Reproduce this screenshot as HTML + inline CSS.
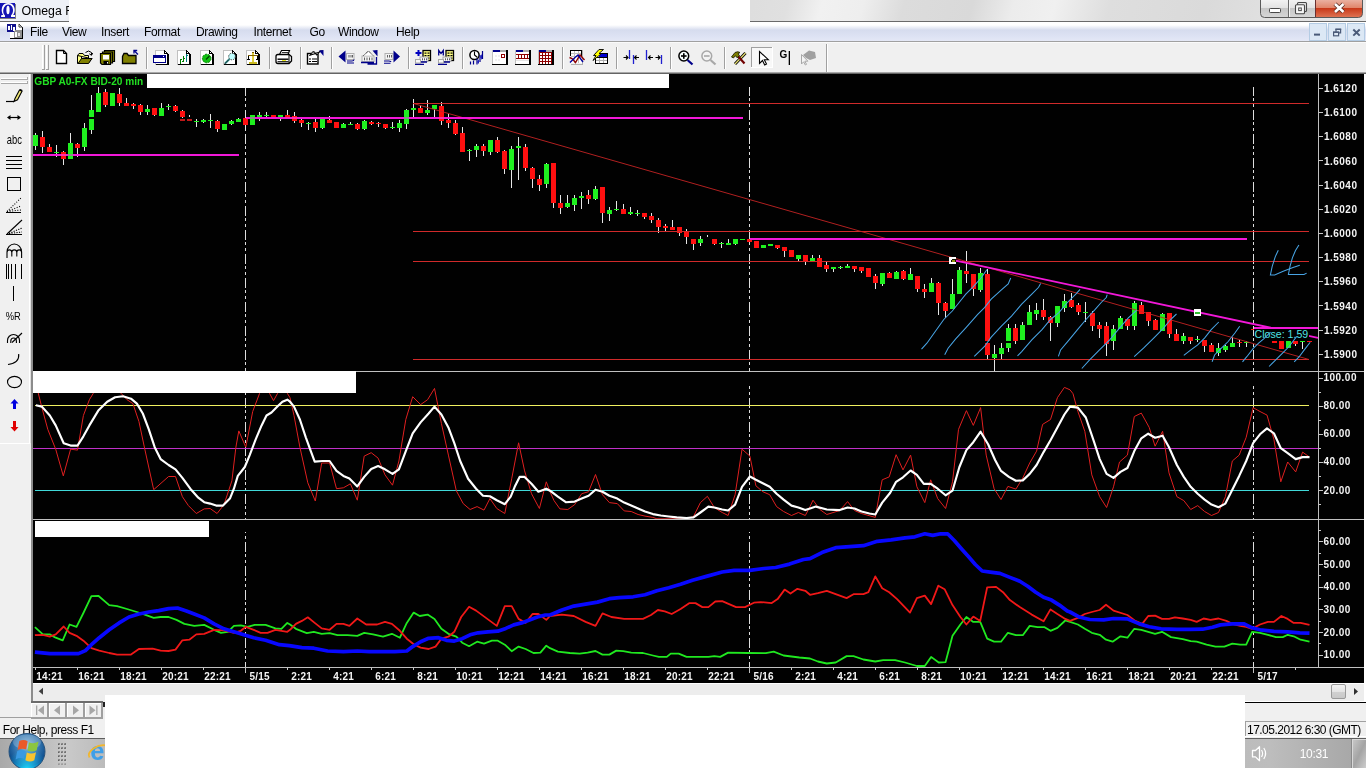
<!DOCTYPE html>
<html><head><meta charset="utf-8"><title>Omega</title>
<style>
*{box-sizing:border-box}
html,body{margin:0;padding:0}
body{width:1366px;height:768px;overflow:hidden;background:#f0f0f0;font-family:"Liberation Sans",sans-serif;font-size:12px;color:#000;position:relative}
.abs{position:absolute}
#title{left:0;top:0;width:1366px;height:21px;background:linear-gradient(105deg,#eef1f7 0%,#eef1f7 5%,#e6e6e6 6%,#dedede 55%,#e0e0e0 57.5%,#f1f1f1 60%,#eeeeee 63%,#dcdcdc 66%,#d9d9d9 71%,#ececec 74%,#f0f0f0 77%,#dedede 81%,#dadada 88%,#e2e2e2 94%,#e8e8e8 100%)}
#titleline{left:0;top:21px;width:1366px;height:1px;background:#6a6a6a}
#titlewhite{left:69px;top:0;width:681px;height:22px;background:#fff}
#menu{left:0;top:22px;width:1366px;height:19px;background:linear-gradient(180deg,#fff 0,#fff 3px,#d6dcee 8px,#dde2f3 14px,#e4e8f6 19px)}
#menuline{left:0;top:41px;width:1366px;height:2px;background:linear-gradient(180deg,#a0a0a0 0,#a0a0a0 1px,#fafafa 1px)}
.mi{position:absolute;opacity:0.999;top:25px;font-size:12px;letter-spacing:-0.35px;line-height:15px;white-space:nowrap}
#toolbar{left:0;top:43px;width:1366px;height:29px;background:#f0f0f0}
#tbline{left:0;top:72px;width:1366px;height:2px;background:linear-gradient(180deg,#a8a8a8 0,#a8a8a8 1px,#646464 1px)}
#leftp{left:0;top:74px;width:33px;height:694px;background:#f0f0f0}
#scroll{left:33px;top:683px;width:1331px;height:19px;background:linear-gradient(180deg,#fff 0,#fff 1px,#ededed 1px)}
#status{left:0;top:702px;width:1366px;height:36px;background:#f0f0f0}
#task{left:0;top:738px;width:1366px;height:30px;background:linear-gradient(90deg,#a9a9a9 0,#c9c9c9 5%,#b4b4b4 9%,#a8a8a8 50%,#bdbdbd 93%,#b2b2b2 96%,#a4a4a4 100%);border-top:1px solid #5e5e5e}
#bigwhite{left:105px;top:695px;width:1140px;height:73px;background:#fff}
</style></head>
<body>
<div id="title" class="abs"></div>
<div id="titleline" class="abs"></div>
<div id="menu" class="abs"></div>
<div id="menuline" class="abs"></div>

<div id="toolbar" class="abs"></div>
<div id="tbline" class="abs"></div>
<div id="leftp" class="abs"></div>
<div id="scroll" class="abs"></div>
<div id="status" class="abs"></div>
<div id="task" class="abs"></div>
<svg class="abs" style="left:0;top:0;opacity:0.999" width="1366" height="768" viewBox="0 0 1366 768">
<rect x="33" y="74" width="1331" height="609" fill="#000"/>
<g shape-rendering="crispEdges">
<rect x="33" y="371" width="1331" height="1" fill="#c0c0c0"/>
<rect x="33" y="519" width="1331" height="1" fill="#c0c0c0"/>
<rect x="33" y="667" width="1331" height="1" fill="#c0c0c0"/>
<rect x="1318" y="74" width="1" height="594" fill="#c0c0c0"/>
</g>
<line x1="245.5" y1="87" x2="245.5" y2="371" stroke="#dedede" stroke-width="1" stroke-dasharray="10 2 3 3 3 3" stroke-dashoffset="1" shape-rendering="crispEdges"/>
<line x1="245.5" y1="386" x2="245.5" y2="519" stroke="#dedede" stroke-width="1" stroke-dasharray="10 2 3 3 3 3" stroke-dashoffset="12" shape-rendering="crispEdges"/>
<line x1="245.5" y1="532" x2="245.5" y2="667" stroke="#dedede" stroke-width="1" stroke-dasharray="10 2 3 3 3 3" stroke-dashoffset="14" shape-rendering="crispEdges"/>
<rect x="245" y="667" width="1" height="6" fill="#c0c0c0" shape-rendering="crispEdges"/>
<line x1="749.5" y1="87" x2="749.5" y2="371" stroke="#dedede" stroke-width="1" stroke-dasharray="10 2 3 3 3 3" stroke-dashoffset="1" shape-rendering="crispEdges"/>
<line x1="749.5" y1="386" x2="749.5" y2="519" stroke="#dedede" stroke-width="1" stroke-dasharray="10 2 3 3 3 3" stroke-dashoffset="12" shape-rendering="crispEdges"/>
<line x1="749.5" y1="532" x2="749.5" y2="667" stroke="#dedede" stroke-width="1" stroke-dasharray="10 2 3 3 3 3" stroke-dashoffset="14" shape-rendering="crispEdges"/>
<rect x="749" y="667" width="1" height="6" fill="#c0c0c0" shape-rendering="crispEdges"/>
<line x1="1253.5" y1="87" x2="1253.5" y2="371" stroke="#dedede" stroke-width="1" stroke-dasharray="10 2 3 3 3 3" stroke-dashoffset="1" shape-rendering="crispEdges"/>
<line x1="1253.5" y1="386" x2="1253.5" y2="519" stroke="#dedede" stroke-width="1" stroke-dasharray="10 2 3 3 3 3" stroke-dashoffset="12" shape-rendering="crispEdges"/>
<line x1="1253.5" y1="532" x2="1253.5" y2="667" stroke="#dedede" stroke-width="1" stroke-dasharray="10 2 3 3 3 3" stroke-dashoffset="14" shape-rendering="crispEdges"/>
<rect x="1253" y="667" width="1" height="6" fill="#c0c0c0" shape-rendering="crispEdges"/>
<g shape-rendering="crispEdges">
<rect x="35" y="133" width="1" height="17" fill="#e6e6e6"/>
<rect x="33" y="135" width="5" height="11" fill="#1ff01f"/>
<rect x="42" y="131" width="1" height="22" fill="#e6e6e6"/>
<rect x="40" y="137" width="5" height="10" fill="#ff1010"/>
<rect x="49" y="144" width="1" height="8" fill="#e6e6e6"/>
<rect x="47" y="147" width="5" height="5" fill="#ff1010"/>
<rect x="56" y="145" width="1" height="12" fill="#e6e6e6"/>
<rect x="54" y="152" width="5" height="1" fill="#1ff01f"/>
<rect x="63" y="151" width="1" height="14" fill="#e6e6e6"/>
<rect x="61" y="152" width="5" height="7" fill="#ff1010"/>
<rect x="70" y="133" width="1" height="26" fill="#e6e6e6"/>
<rect x="68" y="143" width="5" height="16" fill="#1ff01f"/>
<rect x="77" y="143" width="1" height="14" fill="#e6e6e6"/>
<rect x="75" y="144" width="5" height="4" fill="#ff1010"/>
<rect x="84" y="123" width="1" height="28" fill="#e6e6e6"/>
<rect x="82" y="128" width="5" height="19" fill="#1ff01f"/>
<rect x="91" y="95" width="1" height="39" fill="#e6e6e6"/>
<rect x="89" y="110" width="5" height="20" fill="#1ff01f"/>
<rect x="98" y="87" width="1" height="25" fill="#e6e6e6"/>
<rect x="96" y="93" width="5" height="19" fill="#1ff01f"/>
<rect x="105" y="89" width="1" height="18" fill="#e6e6e6"/>
<rect x="103" y="92" width="5" height="13" fill="#ff1010"/>
<rect x="112" y="93" width="1" height="13" fill="#e6e6e6"/>
<rect x="110" y="93" width="5" height="13" fill="#1ff01f"/>
<rect x="119" y="88" width="1" height="18" fill="#e6e6e6"/>
<rect x="117" y="94" width="5" height="9" fill="#ff1010"/>
<rect x="126" y="98" width="1" height="8" fill="#e6e6e6"/>
<rect x="124" y="103" width="5" height="3" fill="#ff1010"/>
<rect x="133" y="103" width="1" height="6" fill="#e6e6e6"/>
<rect x="131" y="104" width="5" height="2" fill="#ff1010"/>
<rect x="140" y="104" width="1" height="11" fill="#e6e6e6"/>
<rect x="138" y="105" width="5" height="7" fill="#ff1010"/>
<rect x="147" y="105" width="1" height="10" fill="#e6e6e6"/>
<rect x="145" y="109" width="5" height="3" fill="#1ff01f"/>
<rect x="154" y="108" width="1" height="8" fill="#e6e6e6"/>
<rect x="152" y="108" width="5" height="7" fill="#ff1010"/>
<rect x="161" y="103" width="1" height="13" fill="#e6e6e6"/>
<rect x="159" y="108" width="5" height="8" fill="#1ff01f"/>
<rect x="168" y="104" width="1" height="6" fill="#e6e6e6"/>
<rect x="166" y="106" width="5" height="1" fill="#1ff01f"/>
<rect x="175" y="105" width="1" height="7" fill="#e6e6e6"/>
<rect x="173" y="106" width="5" height="5" fill="#ff1010"/>
<rect x="182" y="110" width="1" height="8" fill="#e6e6e6"/>
<rect x="180" y="111" width="5" height="6" fill="#ff1010"/>
<rect x="189" y="115" width="1" height="2" fill="#e6e6e6"/>
<rect x="187" y="119" width="5" height="2" fill="#ff1010"/>
<rect x="196" y="119" width="1" height="8" fill="#e6e6e6"/>
<rect x="194" y="121" width="5" height="1" fill="#1ff01f"/>
<rect x="203" y="119" width="1" height="4" fill="#e6e6e6"/>
<rect x="201" y="120" width="5" height="2" fill="#1ff01f"/>
<rect x="210" y="114" width="1" height="14" fill="#e6e6e6"/>
<rect x="208" y="120" width="5" height="1" fill="#1ff01f"/>
<rect x="217" y="120" width="1" height="12" fill="#e6e6e6"/>
<rect x="215" y="121" width="5" height="8" fill="#ff1010"/>
<rect x="224" y="124" width="1" height="6" fill="#e6e6e6"/>
<rect x="222" y="124" width="5" height="6" fill="#1ff01f"/>
<rect x="231" y="120" width="1" height="5" fill="#e6e6e6"/>
<rect x="229" y="121" width="5" height="3" fill="#1ff01f"/>
<rect x="238" y="118" width="1" height="4" fill="#e6e6e6"/>
<rect x="236" y="119" width="5" height="3" fill="#1ff01f"/>
<rect x="245" y="117" width="1" height="14" fill="#e6e6e6"/>
<rect x="243" y="118" width="5" height="7" fill="#ff1010"/>
<rect x="252" y="115" width="1" height="10" fill="#e6e6e6"/>
<rect x="250" y="115" width="5" height="10" fill="#1ff01f"/>
<rect x="259" y="112" width="1" height="9" fill="#e6e6e6"/>
<rect x="257" y="115" width="5" height="2" fill="#1ff01f"/>
<rect x="266" y="112" width="1" height="5" fill="#e6e6e6"/>
<rect x="264" y="115" width="5" height="1" fill="#1ff01f"/>
<rect x="273" y="115" width="1" height="3" fill="#e6e6e6"/>
<rect x="271" y="115" width="5" height="2" fill="#ff1010"/>
<rect x="280" y="115" width="1" height="6" fill="#e6e6e6"/>
<rect x="278" y="115" width="5" height="2" fill="#1ff01f"/>
<rect x="287" y="110" width="1" height="8" fill="#e6e6e6"/>
<rect x="285" y="115" width="5" height="3" fill="#ff1010"/>
<rect x="294" y="112" width="1" height="11" fill="#e6e6e6"/>
<rect x="292" y="116" width="5" height="5" fill="#ff1010"/>
<rect x="301" y="119" width="1" height="8" fill="#e6e6e6"/>
<rect x="299" y="120" width="5" height="3" fill="#ff1010"/>
<rect x="308" y="122" width="1" height="8" fill="#e6e6e6"/>
<rect x="306" y="123" width="5" height="1" fill="#1ff01f"/>
<rect x="315" y="119" width="1" height="13" fill="#e6e6e6"/>
<rect x="313" y="122" width="5" height="6" fill="#ff1010"/>
<rect x="322" y="118" width="1" height="11" fill="#e6e6e6"/>
<rect x="320" y="119" width="5" height="9" fill="#1ff01f"/>
<rect x="329" y="116" width="1" height="7" fill="#e6e6e6"/>
<rect x="327" y="120" width="5" height="3" fill="#ff1010"/>
<rect x="336" y="122" width="1" height="6" fill="#e6e6e6"/>
<rect x="334" y="122" width="5" height="6" fill="#ff1010"/>
<rect x="343" y="123" width="1" height="5" fill="#e6e6e6"/>
<rect x="341" y="124" width="5" height="4" fill="#1ff01f"/>
<rect x="350" y="122" width="1" height="3" fill="#e6e6e6"/>
<rect x="348" y="124" width="5" height="1" fill="#1ff01f"/>
<rect x="357" y="123" width="1" height="7" fill="#e6e6e6"/>
<rect x="355" y="124" width="5" height="5" fill="#ff1010"/>
<rect x="364" y="120" width="1" height="10" fill="#e6e6e6"/>
<rect x="362" y="121" width="5" height="8" fill="#1ff01f"/>
<rect x="371" y="121" width="1" height="4" fill="#e6e6e6"/>
<rect x="369" y="122" width="5" height="2" fill="#ff1010"/>
<rect x="378" y="122" width="1" height="5" fill="#e6e6e6"/>
<rect x="376" y="123" width="5" height="1" fill="#ff1010"/>
<rect x="385" y="124" width="1" height="5" fill="#e6e6e6"/>
<rect x="383" y="124" width="5" height="4" fill="#ff1010"/>
<rect x="392" y="122" width="1" height="7" fill="#e6e6e6"/>
<rect x="390" y="127" width="5" height="1" fill="#1ff01f"/>
<rect x="399" y="120" width="1" height="12" fill="#e6e6e6"/>
<rect x="397" y="123" width="5" height="5" fill="#1ff01f"/>
<rect x="406" y="109" width="1" height="20" fill="#e6e6e6"/>
<rect x="404" y="110" width="5" height="14" fill="#1ff01f"/>
<rect x="413" y="99" width="1" height="18" fill="#e6e6e6"/>
<rect x="411" y="108" width="5" height="2" fill="#1ff01f"/>
<rect x="420" y="105" width="1" height="8" fill="#e6e6e6"/>
<rect x="418" y="108" width="5" height="5" fill="#ff1010"/>
<rect x="427" y="100" width="1" height="15" fill="#e6e6e6"/>
<rect x="425" y="110" width="5" height="3" fill="#1ff01f"/>
<rect x="434" y="105" width="1" height="12" fill="#e6e6e6"/>
<rect x="432" y="105" width="5" height="4" fill="#1ff01f"/>
<rect x="441" y="102" width="1" height="23" fill="#e6e6e6"/>
<rect x="439" y="106" width="5" height="15" fill="#ff1010"/>
<rect x="448" y="114" width="1" height="14" fill="#e6e6e6"/>
<rect x="446" y="120" width="5" height="3" fill="#ff1010"/>
<rect x="455" y="120" width="1" height="15" fill="#e6e6e6"/>
<rect x="453" y="123" width="5" height="11" fill="#ff1010"/>
<rect x="462" y="127" width="1" height="25" fill="#e6e6e6"/>
<rect x="460" y="133" width="5" height="19" fill="#ff1010"/>
<rect x="469" y="149" width="1" height="12" fill="#e6e6e6"/>
<rect x="467" y="150" width="5" height="1" fill="#1ff01f"/>
<rect x="476" y="144" width="1" height="13" fill="#e6e6e6"/>
<rect x="474" y="146" width="5" height="4" fill="#1ff01f"/>
<rect x="483" y="144" width="1" height="12" fill="#e6e6e6"/>
<rect x="481" y="146" width="5" height="5" fill="#ff1010"/>
<rect x="490" y="140" width="1" height="15" fill="#e6e6e6"/>
<rect x="488" y="140" width="5" height="12" fill="#1ff01f"/>
<rect x="497" y="137" width="1" height="16" fill="#e6e6e6"/>
<rect x="495" y="140" width="5" height="12" fill="#ff1010"/>
<rect x="504" y="150" width="1" height="24" fill="#e6e6e6"/>
<rect x="502" y="151" width="5" height="18" fill="#ff1010"/>
<rect x="511" y="146" width="1" height="42" fill="#e6e6e6"/>
<rect x="509" y="149" width="5" height="21" fill="#1ff01f"/>
<rect x="518" y="137" width="1" height="43" fill="#e6e6e6"/>
<rect x="516" y="146" width="5" height="2" fill="#1ff01f"/>
<rect x="525" y="144" width="1" height="27" fill="#e6e6e6"/>
<rect x="523" y="147" width="5" height="21" fill="#ff1010"/>
<rect x="532" y="167" width="1" height="21" fill="#e6e6e6"/>
<rect x="530" y="168" width="5" height="11" fill="#ff1010"/>
<rect x="539" y="175" width="1" height="16" fill="#e6e6e6"/>
<rect x="537" y="179" width="5" height="6" fill="#ff1010"/>
<rect x="546" y="163" width="1" height="25" fill="#e6e6e6"/>
<rect x="544" y="164" width="5" height="20" fill="#1ff01f"/>
<rect x="553" y="163" width="1" height="45" fill="#e6e6e6"/>
<rect x="551" y="163" width="5" height="40" fill="#ff1010"/>
<rect x="560" y="195" width="1" height="19" fill="#e6e6e6"/>
<rect x="558" y="203" width="5" height="5" fill="#ff1010"/>
<rect x="567" y="195" width="1" height="13" fill="#e6e6e6"/>
<rect x="565" y="203" width="5" height="4" fill="#1ff01f"/>
<rect x="574" y="195" width="1" height="16" fill="#e6e6e6"/>
<rect x="572" y="198" width="5" height="7" fill="#1ff01f"/>
<rect x="581" y="192" width="1" height="17" fill="#e6e6e6"/>
<rect x="579" y="196" width="5" height="2" fill="#1ff01f"/>
<rect x="588" y="190" width="1" height="14" fill="#e6e6e6"/>
<rect x="586" y="195" width="5" height="4" fill="#ff1010"/>
<rect x="595" y="186" width="1" height="14" fill="#e6e6e6"/>
<rect x="593" y="189" width="5" height="10" fill="#1ff01f"/>
<rect x="602" y="187" width="1" height="36" fill="#e6e6e6"/>
<rect x="600" y="187" width="5" height="26" fill="#ff1010"/>
<rect x="609" y="207" width="1" height="14" fill="#e6e6e6"/>
<rect x="607" y="210" width="5" height="4" fill="#1ff01f"/>
<rect x="616" y="201" width="1" height="10" fill="#e6e6e6"/>
<rect x="614" y="209" width="5" height="1" fill="#1ff01f"/>
<rect x="623" y="204" width="1" height="10" fill="#e6e6e6"/>
<rect x="621" y="209" width="5" height="5" fill="#ff1010"/>
<rect x="630" y="207" width="1" height="8" fill="#e6e6e6"/>
<rect x="628" y="212" width="5" height="2" fill="#1ff01f"/>
<rect x="637" y="210" width="1" height="6" fill="#e6e6e6"/>
<rect x="635" y="213" width="5" height="1" fill="#1ff01f"/>
<rect x="644" y="213" width="1" height="6" fill="#e6e6e6"/>
<rect x="642" y="213" width="5" height="4" fill="#ff1010"/>
<rect x="651" y="213" width="1" height="10" fill="#e6e6e6"/>
<rect x="649" y="216" width="5" height="4" fill="#ff1010"/>
<rect x="658" y="218" width="1" height="15" fill="#e6e6e6"/>
<rect x="656" y="220" width="5" height="7" fill="#ff1010"/>
<rect x="665" y="224" width="1" height="7" fill="#e6e6e6"/>
<rect x="663" y="226" width="5" height="2" fill="#ff1010"/>
<rect x="672" y="220" width="1" height="10" fill="#e6e6e6"/>
<rect x="670" y="227" width="5" height="3" fill="#ff1010"/>
<rect x="679" y="227" width="1" height="9" fill="#e6e6e6"/>
<rect x="677" y="227" width="5" height="6" fill="#ff1010"/>
<rect x="686" y="229" width="1" height="15" fill="#e6e6e6"/>
<rect x="684" y="231" width="5" height="6" fill="#ff1010"/>
<rect x="693" y="239" width="1" height="11" fill="#e6e6e6"/>
<rect x="691" y="239" width="5" height="5" fill="#ff1010"/>
<rect x="700" y="236" width="1" height="10" fill="#e6e6e6"/>
<rect x="698" y="239" width="5" height="4" fill="#1ff01f"/>
<rect x="707" y="235" width="1" height="2" fill="#e6e6e6"/>
<rect x="714" y="239" width="1" height="6" fill="#e6e6e6"/>
<rect x="712" y="239" width="5" height="5" fill="#ff1010"/>
<rect x="721" y="242" width="1" height="6" fill="#e6e6e6"/>
<rect x="719" y="243" width="5" height="1" fill="#1ff01f"/>
<rect x="728" y="239" width="1" height="6" fill="#e6e6e6"/>
<rect x="726" y="243" width="5" height="2" fill="#1ff01f"/>
<rect x="735" y="239" width="1" height="6" fill="#e6e6e6"/>
<rect x="733" y="239" width="5" height="5" fill="#1ff01f"/>
<rect x="742" y="239" width="1" height="1" fill="#e6e6e6"/>
<rect x="740" y="239" width="5" height="1" fill="#1ff01f"/>
<rect x="749" y="239" width="1" height="3" fill="#e6e6e6"/>
<rect x="747" y="239" width="5" height="3" fill="#ff1010"/>
<rect x="756" y="241" width="1" height="7" fill="#e6e6e6"/>
<rect x="754" y="241" width="5" height="7" fill="#ff1010"/>
<rect x="763" y="245" width="1" height="3" fill="#e6e6e6"/>
<rect x="761" y="245" width="5" height="3" fill="#1ff01f"/>
<rect x="770" y="244" width="1" height="2" fill="#e6e6e6"/>
<rect x="768" y="244" width="5" height="2" fill="#1ff01f"/>
<rect x="777" y="245" width="1" height="4" fill="#e6e6e6"/>
<rect x="775" y="245" width="5" height="3" fill="#ff1010"/>
<rect x="784" y="247" width="1" height="10" fill="#e6e6e6"/>
<rect x="782" y="247" width="5" height="4" fill="#ff1010"/>
<rect x="791" y="250" width="1" height="7" fill="#e6e6e6"/>
<rect x="789" y="250" width="5" height="7" fill="#ff1010"/>
<rect x="798" y="255" width="1" height="6" fill="#e6e6e6"/>
<rect x="796" y="255" width="5" height="4" fill="#1ff01f"/>
<rect x="805" y="255" width="1" height="10" fill="#e6e6e6"/>
<rect x="803" y="255" width="5" height="7" fill="#ff1010"/>
<rect x="812" y="255" width="1" height="6" fill="#e6e6e6"/>
<rect x="810" y="258" width="5" height="3" fill="#1ff01f"/>
<rect x="819" y="255" width="1" height="12" fill="#e6e6e6"/>
<rect x="817" y="258" width="5" height="9" fill="#ff1010"/>
<rect x="826" y="262" width="1" height="10" fill="#e6e6e6"/>
<rect x="824" y="265" width="5" height="4" fill="#ff1010"/>
<rect x="833" y="267" width="1" height="5" fill="#e6e6e6"/>
<rect x="831" y="267" width="5" height="2" fill="#1ff01f"/>
<rect x="840" y="266" width="1" height="3" fill="#e6e6e6"/>
<rect x="838" y="267" width="5" height="1" fill="#1ff01f"/>
<rect x="847" y="264" width="1" height="4" fill="#e6e6e6"/>
<rect x="845" y="266" width="5" height="2" fill="#1ff01f"/>
<rect x="854" y="266" width="1" height="6" fill="#e6e6e6"/>
<rect x="852" y="266" width="5" height="3" fill="#ff1010"/>
<rect x="861" y="267" width="1" height="6" fill="#e6e6e6"/>
<rect x="859" y="267" width="5" height="4" fill="#ff1010"/>
<rect x="868" y="268" width="1" height="9" fill="#e6e6e6"/>
<rect x="866" y="268" width="5" height="9" fill="#ff1010"/>
<rect x="875" y="274" width="1" height="15" fill="#e6e6e6"/>
<rect x="873" y="276" width="5" height="7" fill="#ff1010"/>
<rect x="882" y="273" width="1" height="13" fill="#e6e6e6"/>
<rect x="880" y="273" width="5" height="11" fill="#1ff01f"/>
<rect x="889" y="272" width="1" height="6" fill="#e6e6e6"/>
<rect x="887" y="273" width="5" height="5" fill="#ff1010"/>
<rect x="896" y="271" width="1" height="8" fill="#e6e6e6"/>
<rect x="894" y="272" width="5" height="7" fill="#1ff01f"/>
<rect x="903" y="270" width="1" height="10" fill="#e6e6e6"/>
<rect x="901" y="271" width="5" height="8" fill="#ff1010"/>
<rect x="910" y="268" width="1" height="12" fill="#e6e6e6"/>
<rect x="908" y="274" width="5" height="6" fill="#1ff01f"/>
<rect x="917" y="276" width="1" height="16" fill="#e6e6e6"/>
<rect x="915" y="276" width="5" height="13" fill="#ff1010"/>
<rect x="924" y="284" width="1" height="14" fill="#e6e6e6"/>
<rect x="922" y="289" width="5" height="3" fill="#ff1010"/>
<rect x="931" y="278" width="1" height="14" fill="#e6e6e6"/>
<rect x="929" y="283" width="5" height="9" fill="#1ff01f"/>
<rect x="938" y="282" width="1" height="33" fill="#e6e6e6"/>
<rect x="936" y="283" width="5" height="20" fill="#ff1010"/>
<rect x="945" y="302" width="1" height="16" fill="#e6e6e6"/>
<rect x="943" y="303" width="5" height="8" fill="#ff1010"/>
<rect x="952" y="279" width="1" height="30" fill="#e6e6e6"/>
<rect x="950" y="294" width="5" height="15" fill="#1ff01f"/>
<rect x="959" y="267" width="1" height="27" fill="#e6e6e6"/>
<rect x="957" y="270" width="5" height="24" fill="#1ff01f"/>
<rect x="966" y="251" width="1" height="32" fill="#e6e6e6"/>
<rect x="964" y="271" width="5" height="3" fill="#ff1010"/>
<rect x="973" y="274" width="1" height="22" fill="#e6e6e6"/>
<rect x="971" y="274" width="5" height="15" fill="#ff1010"/>
<rect x="980" y="268" width="1" height="24" fill="#e6e6e6"/>
<rect x="978" y="273" width="5" height="17" fill="#1ff01f"/>
<rect x="987" y="269" width="1" height="90" fill="#e6e6e6"/>
<rect x="985" y="274" width="5" height="81" fill="#ff1010"/>
<rect x="994" y="345" width="1" height="26" fill="#e6e6e6"/>
<rect x="992" y="354" width="5" height="4" fill="#1ff01f"/>
<rect x="1001" y="343" width="1" height="16" fill="#e6e6e6"/>
<rect x="999" y="348" width="5" height="6" fill="#1ff01f"/>
<rect x="1008" y="324" width="1" height="28" fill="#e6e6e6"/>
<rect x="1006" y="328" width="5" height="20" fill="#1ff01f"/>
<rect x="1015" y="324" width="1" height="20" fill="#e6e6e6"/>
<rect x="1013" y="328" width="5" height="13" fill="#ff1010"/>
<rect x="1022" y="322" width="1" height="18" fill="#e6e6e6"/>
<rect x="1020" y="325" width="5" height="15" fill="#1ff01f"/>
<rect x="1029" y="305" width="1" height="20" fill="#e6e6e6"/>
<rect x="1027" y="312" width="5" height="13" fill="#1ff01f"/>
<rect x="1036" y="303" width="1" height="17" fill="#e6e6e6"/>
<rect x="1034" y="310" width="5" height="4" fill="#1ff01f"/>
<rect x="1043" y="299" width="1" height="21" fill="#e6e6e6"/>
<rect x="1041" y="310" width="5" height="7" fill="#ff1010"/>
<rect x="1050" y="316" width="1" height="25" fill="#e6e6e6"/>
<rect x="1048" y="317" width="5" height="6" fill="#ff1010"/>
<rect x="1057" y="306" width="1" height="21" fill="#e6e6e6"/>
<rect x="1055" y="306" width="5" height="17" fill="#1ff01f"/>
<rect x="1064" y="294" width="1" height="18" fill="#e6e6e6"/>
<rect x="1062" y="301" width="5" height="7" fill="#1ff01f"/>
<rect x="1071" y="293" width="1" height="15" fill="#e6e6e6"/>
<rect x="1069" y="300" width="5" height="7" fill="#ff1010"/>
<rect x="1078" y="303" width="1" height="12" fill="#e6e6e6"/>
<rect x="1076" y="305" width="5" height="7" fill="#ff1010"/>
<rect x="1085" y="302" width="1" height="20" fill="#e6e6e6"/>
<rect x="1083" y="312" width="5" height="1" fill="#1ff01f"/>
<rect x="1092" y="311" width="1" height="20" fill="#e6e6e6"/>
<rect x="1090" y="313" width="5" height="13" fill="#ff1010"/>
<rect x="1099" y="322" width="1" height="16" fill="#e6e6e6"/>
<rect x="1097" y="325" width="5" height="4" fill="#ff1010"/>
<rect x="1106" y="322" width="1" height="34" fill="#e6e6e6"/>
<rect x="1104" y="326" width="5" height="18" fill="#ff1010"/>
<rect x="1113" y="325" width="1" height="25" fill="#e6e6e6"/>
<rect x="1111" y="329" width="5" height="12" fill="#1ff01f"/>
<rect x="1120" y="316" width="1" height="13" fill="#e6e6e6"/>
<rect x="1118" y="318" width="5" height="11" fill="#1ff01f"/>
<rect x="1127" y="319" width="1" height="11" fill="#e6e6e6"/>
<rect x="1125" y="319" width="5" height="7" fill="#ff1010"/>
<rect x="1134" y="301" width="1" height="29" fill="#e6e6e6"/>
<rect x="1132" y="303" width="5" height="23" fill="#1ff01f"/>
<rect x="1141" y="302" width="1" height="12" fill="#e6e6e6"/>
<rect x="1139" y="305" width="5" height="9" fill="#ff1010"/>
<rect x="1148" y="312" width="1" height="14" fill="#e6e6e6"/>
<rect x="1146" y="312" width="5" height="9" fill="#ff1010"/>
<rect x="1155" y="319" width="1" height="11" fill="#e6e6e6"/>
<rect x="1153" y="320" width="5" height="10" fill="#ff1010"/>
<rect x="1162" y="313" width="1" height="18" fill="#e6e6e6"/>
<rect x="1160" y="314" width="5" height="17" fill="#1ff01f"/>
<rect x="1169" y="313" width="1" height="25" fill="#e6e6e6"/>
<rect x="1167" y="313" width="5" height="21" fill="#ff1010"/>
<rect x="1176" y="329" width="1" height="12" fill="#e6e6e6"/>
<rect x="1174" y="334" width="5" height="7" fill="#ff1010"/>
<rect x="1183" y="333" width="1" height="11" fill="#e6e6e6"/>
<rect x="1181" y="336" width="5" height="5" fill="#1ff01f"/>
<rect x="1190" y="337" width="1" height="7" fill="#e6e6e6"/>
<rect x="1188" y="337" width="5" height="4" fill="#ff1010"/>
<rect x="1197" y="336" width="1" height="6" fill="#e6e6e6"/>
<rect x="1195" y="339" width="5" height="1" fill="#1ff01f"/>
<rect x="1204" y="340" width="1" height="12" fill="#e6e6e6"/>
<rect x="1202" y="340" width="5" height="6" fill="#ff1010"/>
<rect x="1211" y="343" width="1" height="9" fill="#e6e6e6"/>
<rect x="1209" y="345" width="5" height="7" fill="#ff1010"/>
<rect x="1218" y="343" width="1" height="13" fill="#e6e6e6"/>
<rect x="1216" y="348" width="5" height="5" fill="#1ff01f"/>
<rect x="1225" y="345" width="1" height="7" fill="#e6e6e6"/>
<rect x="1223" y="346" width="5" height="4" fill="#1ff01f"/>
<rect x="1232" y="337" width="1" height="10" fill="#e6e6e6"/>
<rect x="1230" y="343" width="5" height="4" fill="#1ff01f"/>
<rect x="1239" y="340" width="1" height="7" fill="#e6e6e6"/>
<rect x="1237" y="342" width="5" height="1" fill="#ff1010"/>
<rect x="1246" y="341" width="1" height="6" fill="#e6e6e6"/>
<rect x="1244" y="342" width="5" height="1" fill="#1ff01f"/>
<rect x="1253" y="329" width="1" height="1" fill="#e6e6e6"/>
<rect x="1251" y="329" width="5" height="1" fill="#ff1010"/>
<rect x="1274" y="341" width="1" height="2" fill="#e6e6e6"/>
<rect x="1272" y="341" width="5" height="2" fill="#ff1010"/>
<rect x="1281" y="341" width="1" height="8" fill="#e6e6e6"/>
<rect x="1279" y="341" width="5" height="8" fill="#ff1010"/>
<rect x="1288" y="341" width="1" height="7" fill="#e6e6e6"/>
<rect x="1286" y="341" width="5" height="7" fill="#1ff01f"/>
<rect x="1295" y="341" width="1" height="5" fill="#e6e6e6"/>
<rect x="1293" y="341" width="5" height="3" fill="#ff1010"/>
<rect x="1302" y="341" width="1" height="8" fill="#e6e6e6"/>
<rect x="1300" y="341" width="5" height="1" fill="#1ff01f"/>
<rect x="1309" y="341" width="1" height="1" fill="#e6e6e6"/>
<rect x="1307" y="341" width="5" height="1" fill="#ff1010"/>
<rect x="180" y="119" width="5" height="2" fill="#c01818"/>
<rect x="187" y="119" width="5" height="2" fill="#c01818"/>
<rect x="89" y="117" width="5" height="2" fill="#000"/>
<rect x="985" y="341" width="5" height="2" fill="#000"/>
<rect x="1006" y="341" width="5" height="2" fill="#000"/>
</g>
<g shape-rendering="crispEdges">
<rect x="413" y="103" width="896" height="1" fill="#d02a2a"/>
<rect x="413" y="231" width="896" height="1" fill="#d02a2a"/>
<rect x="413" y="261" width="896" height="1" fill="#d02a2a"/>
<rect x="413" y="359" width="896" height="1" fill="#d02a2a"/>
</g>
<line x1="413.5" y1="103.5" x2="1309" y2="359.5" stroke="#c42424" stroke-width="0.9"/>
<g shape-rendering="crispEdges">
<rect x="33" y="154" width="206" height="2" fill="#f218d8"/>
<rect x="246" y="117" width="497" height="2" fill="#f218d8"/>
<rect x="750" y="238" width="497" height="2" fill="#f218d8"/>
<rect x="61" y="154" width="5" height="2" fill="#ff30a8"/>
<rect x="68" y="154" width="5" height="2" fill="#8c8c8c"/>
<rect x="250" y="117" width="5" height="2" fill="#8c8c8c"/>
<rect x="285" y="117" width="5" height="1" fill="#ff30a8"/>
<rect x="292" y="117" width="5" height="2" fill="#ff30a8"/>
<rect x="404" y="117" width="5" height="2" fill="#8c8c8c"/>
<rect x="439" y="117" width="5" height="2" fill="#ff30a8"/>
</g>
<line x1="955.7" y1="260.6" x2="1318" y2="337.8" stroke="#f218d8" stroke-width="1.75"/>
<rect x="1254" y="329" width="55" height="12" fill="#000"/>
<rect x="1254" y="327" width="64" height="2" fill="#f218d8" shape-rendering="crispEdges"/>
<text x="1254.6" y="338" font-size="10.6" fill="#52e4e4" font-family="Liberation Sans, sans-serif">Close: 1.59</text>
<g shape-rendering="crispEdges"><rect x="949" y="257" width="7" height="7" fill="#fff"/><rect x="951" y="259" width="5" height="3" fill="#101000"/><rect x="952" y="260" width="3" height="2" fill="#909010"/><rect x="951" y="258" width="1" height="2" fill="#fff"/></g>
<rect x="1194" y="309" width="7" height="7" fill="#fff"/><rect x="1195" y="312" width="5" height="2" fill="#30c030"/>
<polyline points="921.5,349.1 926.9,343.2 935.4,331.3 943.8,319.5 952.3,311.0 959.1,302.5 965.8,294.1 972.6,287.3 981.1,278.0 987.0,269.5" fill="none" stroke="#48a4e4" stroke-width="1.05"/>
<polyline points="944.7,354.7 948.1,348.2 955.7,338.9 965.8,327.9 977.7,314.4 984.5,307.6 991.2,299.2 1001.4,289.8 1008.2,283.9 1010.7,278.0" fill="none" stroke="#48a4e4" stroke-width="1.05"/>
<polyline points="974.3,356.4 984.5,346.5 991.2,337.2 1001.4,326.2 1011.5,316.1 1021.7,304.2 1031.8,294.1 1038.6,287.3 1040.6,283.6" fill="none" stroke="#48a4e4" stroke-width="1.05"/>
<polyline points="1017.5,355.8 1021.7,351.6 1031.8,339.8 1042.0,329.6 1050.5,319.5 1058.9,312.7 1067.4,302.5 1075.8,294.1 1080.1,289.3" fill="none" stroke="#48a4e4" stroke-width="1.05"/>
<polyline points="1058.4,356.4 1060.6,349.9 1069.1,339.8 1077.5,329.6 1086.0,319.5 1094.5,310.2 1101.2,302.5 1106.3,297.5 1107.2,294.6" fill="none" stroke="#48a4e4" stroke-width="1.05"/>
<polyline points="1081.8,368.5 1089.4,360.1 1099.5,349.9 1109.7,339.8 1118.2,329.6 1128.3,317.8 1136.8,310.2" fill="none" stroke="#48a4e4" stroke-width="1.05"/>
<polyline points="1134.2,356.7 1143.5,348.2 1153.7,338.1 1163.8,327.9 1170.6,319.5 1176.5,314.0" fill="none" stroke="#48a4e4" stroke-width="1.05"/>
<polyline points="1183.8,355.3 1190.9,349.9 1197.7,344.8 1204.5,338.1 1211.2,329.6 1218.8,322.0" fill="none" stroke="#48a4e4" stroke-width="1.05"/>
<polyline points="1212.1,361.8 1214.6,355.0 1221.4,348.2 1228.2,341.5 1234.9,333.0 1239.7,326.2" fill="none" stroke="#48a4e4" stroke-width="1.05"/>
<polyline points="1242.5,361.8 1246.8,356.7 1253.5,348.2 1258.6,343.2 1263.7,338.9 1270.5,332.2" fill="none" stroke="#48a4e4" stroke-width="1.05"/>
<polyline points="1269.1,366.5 1275.5,360.1 1282.3,353.3 1289.1,346.5 1296.7,336.4" fill="none" stroke="#48a4e4" stroke-width="1.05"/>
<polyline points="1294.2,361.8 1299.2,356.7 1304.3,349.9 1310.2,342.3" fill="none" stroke="#48a4e4" stroke-width="1.05"/>
<polyline points="1278.3,250.3 1275.3,256.6 1272.2,266.4 1270.4,275 1274.7,275 1283.2,271.3 1293,267.6 1299.8,265.2" fill="none" stroke="#48a4e4" stroke-width="1.05"/>
<polyline points="1298.9,245 1295.5,250.5 1292.4,257.8 1290,266.4 1288.4,274.4 1304,274.4 1306.7,273.1" fill="none" stroke="#48a4e4" stroke-width="1.05"/>
<g shape-rendering="crispEdges">
<rect x="35" y="405" width="1274" height="1" fill="#f0f060"/>
<rect x="33" y="448" width="1285" height="1" fill="#c030c8"/>
<rect x="35" y="490" width="1274" height="1" fill="#40d8d8"/>
</g>
<clipPath id="c2"><rect x="33" y="372" width="1285" height="147"/></clipPath>
<path d="M36.9,387.8 L41.9,407.6 L47.8,429.4 L55.7,449.2 L63.3,475.9 L70.6,449.2 L77.5,450.1 L83.4,415.5 L89.4,399.7 L93.3,393.3 L101.3,383.8 L113.1,385.8 L121.1,393.3 L127.0,399.7 L132.9,403.6 L138.9,421.4 L144.8,449.2 L153.7,489.7 L168.6,476.5 L175.5,476.5 L182.4,496.7 L188.4,505.6 L196.3,513.5 L204.2,508.9 L210.1,508.5 L217.1,513.5 L224.0,504.6 L231.9,480.8 L235.9,447.2 L238.8,430.9 L245.8,447.2 L252.7,411.5 L259.6,393.3 L263.6,387.8 L269.5,393.3 L273.5,400.7 L277.4,393.7 L282.4,387.8 L287.3,393.3 L290.0,397.7 L294.0,415.5 L299.9,447.2 L307.8,482.8 L315.3,501.0 L321.7,463.0 L329.6,463.0 L336.5,488.7 L343.4,487.8 L350.4,483.8 L357.3,500.2 L364.2,456.1 L371.2,452.7 L378.1,458.1 L385.0,474.9 L392.5,485.2 L398.9,461.0 L405.8,419.5 L412.7,396.7 L420.6,404.6 L427.6,399.7 L434.5,388.4 L441.4,423.4 L448.4,455.1 L456.3,490.7 L463.2,503.6 L470.1,509.5 L477.1,506.6 L484.0,510.1 L489.9,498.6 L496.8,508.5 L504.8,513.5 L511.7,478.8 L518.6,442.8 L524.6,470.9 L531.5,493.7 L539.4,508.5 L546.3,481.8 L550.0,491.7 L554.0,500.6 L559.9,508.9 L567.8,509.5 L574.7,504.6 L581.7,493.7 L588.6,491.7 L595.5,474.5 L602.5,494.7 L609.4,502.6 L617.3,503.6 L624.2,510.9 L631.2,511.5 L638.1,514.5 L645.0,516.1 L652.9,517.4 L656.9,518.8 L686.6,518.8 L693.5,516.5 L700.4,502.6 L707.4,496.3 L714.3,507.5 L722.2,512.5 L728.1,515.5 L735.1,494.7 L742.0,449.2 L749.9,456.1 L755.9,485.8 L762.8,491.7 L769.7,494.7 L776.6,506.6 L783.6,511.5 L791.5,515.5 L798.4,512.5 L805.3,515.5 L810.0,506.6 L813.0,500.2 L819.9,509.5 L826.8,514.5 L839.7,510.5 L847.6,501.6 L854.5,510.5 L861.5,513.5 L875.3,517.4 L879.3,494.7 L882.2,479.8 L889.2,476.9 L896.1,454.7 L903.0,469.9 L910.6,455.1 L916.9,486.8 L924.8,502.6 L930.7,479.8 L937.7,498.6 L945.6,508.5 L952.5,481.8 L958.5,429.4 L966.4,410.6 L973.3,425.4 L980.6,407.6 L986.2,455.1 L994.1,488.7 L1001.0,499.6 L1007.9,486.4 L1015.9,489.1 L1022.8,477.9 L1029.7,463.0 L1036.6,451.1 L1042.6,424.4 L1050.5,419.5 L1057.4,397.7 L1064.4,387.4 L1070.0,389.8 L1073.0,393.7 L1077.9,411.5 L1084.8,431.3 L1091.8,474.9 L1099.7,496.7 L1106.6,507.5 L1113.5,486.8 L1119.5,462.0 L1127.4,455.1 L1134.3,416.5 L1141.3,413.1 L1149.2,427.4 L1155.1,446.2 L1162.6,431.3 L1169.0,472.9 L1176.9,496.7 L1183.8,500.6 L1190.7,509.5 L1197.7,505.6 L1204.6,511.5 L1211.5,515.5 L1218.5,512.5 L1225.4,496.7 L1232.3,461.0 L1239.2,455.1 L1246.2,437.3 L1253.1,407.6 L1260.0,411.5 L1267.0,415.1 L1273.9,439.3 L1280.8,481.8 L1287.7,462.0 L1295.7,471.9 L1302.6,452.1 L1309.5,457.1" fill="none" stroke="#e02020" stroke-width="1" clip-path="url(#c2)"/>
<path d="M35.9,405.2 L41.9,406.6 L49.8,415.5 L55.7,425.4 L63.7,443.2 L70.6,445.6 L77.5,445.6 L83.4,436.3 L89.4,425.4 L98.3,410.6 L107.2,401.7 L115.1,397.3 L123.0,396.3 L131.0,398.7 L136.9,403.6 L142.8,413.5 L148.8,429.4 L154.7,447.2 L160.6,459.1 L168.6,465.0 L175.5,469.3 L182.4,477.9 L190.3,488.7 L198.3,497.7 L204.2,502.2 L210.1,503.6 L216.1,505.6 L223.0,505.6 L229.9,498.6 L233.9,488.7 L237.8,475.9 L244.8,467.0 L249.7,455.1 L255.7,439.3 L261.6,425.4 L266.5,415.5 L271.5,412.5 L277.4,406.6 L282.4,401.7 L287.3,399.7 L290.0,401.7 L294.0,406.6 L299.9,419.5 L305.8,437.3 L310.8,451.1 L314.7,461.6 L322.7,461.0 L329.6,461.0 L336.5,470.9 L343.4,475.9 L349.4,478.5 L357.3,486.4 L364.2,476.9 L371.2,469.0 L378.1,466.0 L385.0,469.3 L392.5,473.9 L398.9,469.3 L405.8,451.1 L412.7,433.3 L420.6,422.4 L428.6,413.5 L434.5,406.6 L441.4,414.5 L448.4,427.4 L454.3,443.2 L460.2,461.0 L468.1,478.8 L476.1,488.7 L483.0,495.7 L489.9,496.3 L496.8,500.2 L504.8,504.2 L510.7,496.7 L514.7,486.8 L519.6,476.9 L524.6,476.9 L531.5,483.8 L538.4,491.7 L546.3,488.7 L550.0,490.7 L557.9,496.7 L565.8,502.2 L574.7,501.6 L581.7,498.6 L588.6,495.7 L595.5,489.7 L602.5,491.7 L609.4,495.7 L617.3,498.6 L624.2,502.6 L631.2,505.6 L638.1,508.5 L645.0,511.5 L652.9,514.1 L660.8,515.5 L668.8,516.5 L676.7,517.4 L686.6,518.0 L693.5,517.4 L700.4,512.5 L708.4,506.6 L714.3,507.5 L722.2,509.5 L728.1,510.5 L735.1,504.6 L742.0,486.8 L749.9,476.5 L755.9,479.8 L762.8,483.2 L769.7,486.8 L776.6,493.7 L783.6,499.6 L791.5,505.6 L798.4,507.5 L805.3,510.1 L810.0,508.5 L815.9,506.6 L826.8,509.5 L839.7,510.1 L847.6,507.5 L854.5,508.5 L861.5,511.5 L869.4,513.5 L875.3,514.5 L882.2,502.6 L890.2,492.7 L896.1,481.8 L903.0,477.3 L910.6,470.5 L916.9,474.9 L923.8,483.8 L930.7,483.8 L937.7,488.7 L945.6,495.3 L952.5,490.7 L959.4,467.0 L966.4,450.1 L973.3,442.2 L980.6,431.7 L988.1,444.2 L995.1,460.0 L1001.0,470.9 L1008.9,476.9 L1015.9,480.8 L1022.8,480.4 L1029.7,473.9 L1036.6,465.0 L1043.6,452.1 L1050.5,440.2 L1057.4,427.4 L1064.4,414.5 L1070.0,406.6 L1077.9,407.6 L1085.8,417.5 L1093.8,441.2 L1099.7,459.1 L1106.6,473.9 L1113.5,477.9 L1120.5,471.9 L1127.4,468.0 L1134.3,451.1 L1141.3,438.3 L1148.2,433.7 L1155.1,437.7 L1162.6,435.7 L1169.0,447.2 L1176.9,465.0 L1183.8,476.9 L1190.7,486.8 L1197.7,493.7 L1204.6,499.6 L1211.5,504.6 L1218.5,507.2 L1225.4,503.6 L1232.3,489.7 L1239.2,475.9 L1246.2,461.0 L1253.1,443.2 L1260.0,434.3 L1267.0,428.4 L1273.9,433.3 L1280.8,448.2 L1287.7,453.1 L1295.7,459.1 L1302.6,457.1 L1309.5,457.1" fill="none" stroke="#fff" stroke-width="2.15" stroke-linejoin="round" clip-path="url(#c2)"/>
<clipPath id="c3"><rect x="33" y="520" width="1285" height="147"/></clipPath>
<path d="M34.9,627.2 L42.9,634.4 L49.8,634.4 L55.7,637.7 L62.7,640.3 L69.6,624.5 L76.5,626.8 L83.4,613.0 L91.4,596.2 L98.3,595.8 L109.2,605.1 L117.1,606.1 L127.0,609.0 L136.9,612.0 L144.8,614.6 L153.7,617.9 L160.6,617.0 L168.6,617.0 L176.5,619.9 L184.4,623.9 L194.3,625.9 L204.2,624.9 L214.1,629.8 L221.0,632.8 L227.9,631.8 L233.9,625.9 L240.8,625.3 L247.7,626.8 L254.7,624.9 L265.6,624.9 L275.4,628.4 L281.4,628.8 L287.3,622.9 L290.0,624.5 L295.9,628.8 L306.8,633.2 L313.8,631.8 L321.7,633.8 L329.6,633.2 L337.5,635.2 L347.4,635.2 L357.3,635.8 L364.2,632.8 L373.1,634.4 L383.0,636.7 L391.9,633.8 L399.9,637.7 L406.8,622.9 L413.7,612.6 L419.7,616.0 L427.6,614.6 L434.5,618.9 L441.4,628.8 L448.4,633.8 L456.3,636.7 L462.2,642.7 L469.1,646.2 L477.1,641.7 L484.0,643.7 L491.9,640.7 L497.8,640.7 L504.8,644.7 L511.7,651.2 L518.6,646.6 L525.6,649.0 L533.5,653.0 L540.4,652.6 L546.3,645.7 L550.0,648.2 L557.9,651.6 L569.8,653.0 L579.7,653.6 L587.6,652.6 L595.5,651.0 L602.5,654.6 L609.4,654.6 L616.3,650.6 L623.2,651.2 L631.2,652.6 L643.0,653.0 L652.9,655.5 L658.9,656.9 L666.8,656.9 L670.7,653.6 L678.7,653.6 L686.6,656.9 L708.4,656.9 L714.3,656.1 L720.2,656.9 L728.1,652.6 L747.9,653.0 L765.8,653.2 L773.7,651.6 L783.6,655.5 L799.4,657.5 L810.0,658.5 L817.9,661.5 L826.8,663.5 L835.7,662.5 L846.6,656.1 L853.5,656.1 L863.4,659.5 L875.3,661.5 L883.2,660.1 L895.1,660.1 L905.0,662.5 L916.9,666.0 L924.8,666.0 L931.1,656.9 L938.7,662.5 L945.6,662.1 L952.5,635.8 L960.4,624.5 L966.4,617.0 L973.3,621.9 L980.2,621.9 L987.2,638.7 L994.1,641.7 L1001.0,641.7 L1007.9,632.8 L1015.9,635.2 L1022.8,635.2 L1029.7,625.9 L1037.6,627.2 L1044.6,627.2 L1050.5,630.8 L1057.4,627.8 L1065.3,620.5 L1070.0,621.9 L1077.9,624.5 L1084.8,628.8 L1091.8,632.8 L1099.7,634.8 L1106.0,639.7 L1112.6,641.7 L1120.5,636.3 L1127.4,637.7 L1134.3,628.8 L1141.3,629.8 L1148.2,631.8 L1155.1,633.8 L1162.0,631.8 L1171.0,637.1 L1182.8,639.1 L1190.7,641.1 L1196.7,641.7 L1206.6,644.7 L1215.5,646.6 L1224.4,646.6 L1232.3,643.7 L1240.2,644.7 L1246.2,644.7 L1252.1,631.8 L1260.0,632.8 L1267.9,634.8 L1275.9,637.1 L1282.8,637.1 L1287.7,634.8 L1293.7,636.3 L1300.6,639.7 L1309.5,641.7" fill="none" stroke="#20e820" stroke-width="1.8" stroke-linejoin="round" clip-path="url(#c3)"/>
<path d="M34.9,635.2 L42.9,634.8 L49.8,636.7 L55.7,634.4 L63.7,626.5 L69.6,632.8 L76.5,635.8 L83.4,640.7 L91.4,648.2 L99.3,650.6 L109.2,653.0 L117.1,654.6 L131.0,654.6 L138.9,649.0 L152.7,648.6 L160.6,650.6 L168.6,651.0 L175.5,649.6 L182.4,640.3 L189.3,639.7 L196.3,634.4 L204.2,633.8 L214.1,629.8 L224.0,630.4 L233.9,632.8 L240.8,630.8 L245.8,626.8 L253.7,629.8 L260.6,632.8 L267.5,632.8 L275.4,629.8 L287.3,631.8 L290.0,629.8 L295.9,623.9 L301.9,620.9 L307.8,617.3 L314.7,622.9 L321.7,628.4 L329.6,629.8 L336.5,623.9 L343.4,623.9 L349.4,625.9 L357.3,618.5 L366.2,624.5 L377.1,624.5 L385.0,621.9 L391.9,623.9 L399.9,630.8 L406.8,638.7 L413.7,644.3 L420.6,647.6 L428.6,649.0 L435.5,646.6 L441.4,638.7 L448.4,636.7 L454.3,631.8 L461.2,617.0 L469.1,606.7 L476.1,610.6 L496.8,625.9 L504.8,606.1 L511.7,606.1 L518.6,618.9 L525.6,622.9 L532.5,614.0 L538.4,614.0 L546.3,619.9 L550.0,616.0 L561.9,614.6 L573.8,616.0 L585.6,621.9 L595.5,625.9 L602.5,613.4 L611.4,617.0 L624.2,618.9 L643.0,618.9 L651.0,615.0 L657.9,610.0 L664.8,611.4 L671.7,614.0 L680.6,609.0 L689.5,603.1 L695.5,603.1 L702.4,607.1 L708.4,607.1 L715.3,601.5 L722.2,601.1 L729.1,604.1 L736.1,607.1 L745.0,607.1 L753.9,602.7 L760.8,602.1 L771.7,603.1 L777.6,599.1 L784.6,589.6 L790.5,593.6 L797.4,588.8 L805.3,590.8 L810.0,594.8 L817.9,593.2 L826.8,590.8 L835.7,594.2 L846.6,598.1 L853.5,594.2 L863.4,594.2 L868.4,592.2 L875.3,576.4 L882.2,588.2 L889.2,592.2 L897.1,599.1 L910.0,612.6 L916.9,598.1 L924.8,595.6 L931.1,604.1 L938.3,585.7 L944.6,589.2 L952.5,605.1 L960.4,617.0 L966.4,624.5 L973.3,616.6 L980.2,620.9 L987.2,587.3 L996.1,586.9 L1003.0,592.2 L1009.9,600.1 L1019.8,607.1 L1031.7,614.6 L1043.6,621.3 L1050.5,609.4 L1057.4,614.0 L1065.3,618.9 L1070.0,620.9 L1077.9,617.9 L1084.8,614.0 L1091.8,612.0 L1099.7,610.0 L1106.0,604.7 L1113.5,610.6 L1127.4,615.0 L1135.3,620.9 L1142.2,623.9 L1148.2,616.0 L1155.1,615.6 L1162.0,618.9 L1169.0,618.9 L1174.9,617.3 L1182.8,618.5 L1190.7,619.9 L1196.7,621.9 L1203.6,618.5 L1210.5,619.9 L1218.5,618.5 L1226.4,620.9 L1232.3,623.9 L1240.2,625.9 L1246.2,626.8 L1252.1,628.8 L1260.0,624.5 L1267.9,621.9 L1273.9,621.9 L1281.4,616.0 L1287.7,618.9 L1293.7,622.9 L1300.6,622.9 L1309.5,624.9" fill="none" stroke="#f01818" stroke-width="1.8" stroke-linejoin="round" clip-path="url(#c3)"/>
<path d="M34.9,652.2 L49.8,653.6 L63.7,653.6 L78.5,653.6 L85.4,650.6 L91.4,644.7 L99.3,637.7 L109.2,629.8 L119.1,622.9 L129.0,617.0 L138.9,614.0 L148.8,612.0 L158.7,610.6 L168.6,608.6 L177.5,608.0 L186.4,611.0 L194.3,614.0 L204.2,617.9 L214.1,623.9 L224.0,628.8 L233.9,631.8 L243.8,634.8 L253.7,637.7 L265.6,640.3 L279.4,644.7 L289.3,645.7 L301.9,647.6 L313.8,648.2 L327.6,651.0 L343.4,651.6 L357.3,651.0 L369.2,651.6 L385.0,651.6 L394.9,651.6 L406.8,651.0 L412.7,646.6 L420.6,641.7 L428.6,638.3 L438.5,637.7 L446.4,640.3 L454.3,641.1 L462.2,638.7 L470.1,634.8 L478.0,632.8 L487.9,631.8 L497.8,631.2 L505.8,628.4 L513.7,624.9 L521.6,622.9 L529.5,619.9 L537.4,617.0 L545.3,615.0 L550.0,615.0 L561.9,610.0 L573.8,606.1 L585.6,604.1 L597.5,602.1 L609.4,598.7 L619.3,597.6 L633.1,596.8 L645.0,594.8 L656.9,590.8 L668.8,587.7 L680.6,584.3 L692.5,580.3 L706.4,576.4 L722.2,572.0 L734.1,570.4 L749.9,570.4 L763.8,568.5 L775.7,567.5 L789.5,564.1 L803.4,559.5 L810.0,558.6 L821.9,552.6 L835.7,547.7 L849.6,546.7 L863.4,545.7 L877.3,541.3 L891.2,539.8 L905.0,537.8 L914.9,536.8 L924.8,533.8 L932.7,535.4 L940.6,533.8 L947.6,533.8 L954.5,540.7 L961.4,548.7 L968.4,556.6 L975.3,564.5 L982.2,571.0 L992.1,572.4 L1000.0,573.4 L1009.9,577.4 L1019.8,581.3 L1027.7,586.3 L1035.7,592.2 L1043.6,597.2 L1051.5,600.1 L1059.4,605.1 L1067.3,611.0 L1070.0,612.0 L1079.9,617.3 L1089.8,619.5 L1103.7,619.9 L1113.5,618.5 L1127.4,618.9 L1139.3,623.9 L1149.2,626.8 L1161.1,628.8 L1176.9,629.4 L1190.7,629.4 L1202.6,629.2 L1212.5,627.2 L1220.4,624.9 L1232.3,623.9 L1244.2,623.9 L1252.1,627.8 L1260.0,629.8 L1273.9,631.4 L1287.7,631.8 L1299.6,632.8 L1309.5,633.2" fill="none" stroke="#0808ff" stroke-width="3.7" stroke-linejoin="round" clip-path="url(#c3)"/>
<g shape-rendering="crispEdges" fill="#c8c8c8">
<rect x="1319" y="88" width="4" height="1"/>
<rect x="1319" y="112" width="4" height="1"/>
<rect x="1319" y="136" width="4" height="1"/>
<rect x="1319" y="160" width="4" height="1"/>
<rect x="1319" y="185" width="4" height="1"/>
<rect x="1319" y="209" width="4" height="1"/>
<rect x="1319" y="233" width="4" height="1"/>
<rect x="1319" y="257" width="4" height="1"/>
<rect x="1319" y="281" width="4" height="1"/>
<rect x="1319" y="305" width="4" height="1"/>
<rect x="1319" y="330" width="4" height="1"/>
<rect x="1319" y="354" width="4" height="1"/>
<rect x="1319" y="378" width="4" height="1"/>
<rect x="1319" y="406" width="4" height="1"/>
<rect x="1319" y="434" width="4" height="1"/>
<rect x="1319" y="462" width="4" height="1"/>
<rect x="1319" y="490" width="4" height="1"/>
<rect x="1319" y="392" width="2" height="1"/>
<rect x="1319" y="420" width="2" height="1"/>
<rect x="1319" y="448" width="2" height="1"/>
<rect x="1319" y="476" width="2" height="1"/>
<rect x="1319" y="504" width="2" height="1"/>
<rect x="1319" y="541" width="4" height="1"/>
<rect x="1319" y="564" width="4" height="1"/>
<rect x="1319" y="587" width="4" height="1"/>
<rect x="1319" y="609" width="4" height="1"/>
<rect x="1319" y="632" width="4" height="1"/>
<rect x="1319" y="655" width="4" height="1"/>
<rect x="1319" y="530" width="2" height="1"/>
<rect x="1319" y="553" width="2" height="1"/>
<rect x="1319" y="575" width="2" height="1"/>
<rect x="1319" y="598" width="2" height="1"/>
<rect x="1319" y="621" width="2" height="1"/>
<rect x="1319" y="643" width="2" height="1"/>
</g>
<g font-family="Liberation Sans, sans-serif" font-weight="bold" font-size="10" fill="#f4f4f4">
<text x="1323.9" y="92.0" letter-spacing="0.5">1.6120</text>
<text x="1323.9" y="116.1" letter-spacing="0.5">1.6100</text>
<text x="1323.9" y="140.3" letter-spacing="0.5">1.6080</text>
<text x="1323.9" y="164.5" letter-spacing="0.5">1.6060</text>
<text x="1323.9" y="188.6" letter-spacing="0.5">1.6040</text>
<text x="1323.9" y="212.8" letter-spacing="0.5">1.6020</text>
<text x="1323.9" y="237.0" letter-spacing="0.5">1.6000</text>
<text x="1323.9" y="261.1" letter-spacing="0.5">1.5980</text>
<text x="1323.9" y="285.3" letter-spacing="0.5">1.5960</text>
<text x="1323.9" y="309.5" letter-spacing="0.5">1.5940</text>
<text x="1323.9" y="333.7" letter-spacing="0.5">1.5920</text>
<text x="1323.9" y="357.8" letter-spacing="0.5">1.5900</text>
<text x="1323.4" y="381.0" letter-spacing="0.5">100.00</text>
<text x="1323.4" y="409.1" letter-spacing="0.5">80.00</text>
<text x="1323.4" y="437.2" letter-spacing="0.5">60.00</text>
<text x="1323.4" y="465.3" letter-spacing="0.5">40.00</text>
<text x="1323.4" y="493.7" letter-spacing="0.5">20.00</text>
<text x="1323.4" y="544.8" letter-spacing="0.5">60.00</text>
<text x="1323.4" y="567.5" letter-spacing="0.5">50.00</text>
<text x="1323.4" y="590.2" letter-spacing="0.5">40.00</text>
<text x="1323.4" y="612.8" letter-spacing="0.5">30.00</text>
<text x="1323.4" y="635.5" letter-spacing="0.5">20.00</text>
<text x="1323.4" y="658.1" letter-spacing="0.5">10.00</text>
<text x="49.6" y="679.9" font-size="10" letter-spacing="0.2" text-anchor="middle">14:21</text>
<text x="91.6" y="679.9" font-size="10" letter-spacing="0.2" text-anchor="middle">16:21</text>
<text x="133.6" y="679.9" font-size="10" letter-spacing="0.2" text-anchor="middle">18:21</text>
<text x="175.6" y="679.9" font-size="10" letter-spacing="0.2" text-anchor="middle">20:21</text>
<text x="217.6" y="679.9" font-size="10" letter-spacing="0.2" text-anchor="middle">22:21</text>
<text x="259.6" y="679.9" font-size="10" letter-spacing="0.2" text-anchor="middle">5/15</text>
<text x="301.6" y="679.9" font-size="10" letter-spacing="0.2" text-anchor="middle">2:21</text>
<text x="343.6" y="679.9" font-size="10" letter-spacing="0.2" text-anchor="middle">4:21</text>
<text x="385.6" y="679.9" font-size="10" letter-spacing="0.2" text-anchor="middle">6:21</text>
<text x="427.6" y="679.9" font-size="10" letter-spacing="0.2" text-anchor="middle">8:21</text>
<text x="469.6" y="679.9" font-size="10" letter-spacing="0.2" text-anchor="middle">10:21</text>
<text x="511.6" y="679.9" font-size="10" letter-spacing="0.2" text-anchor="middle">12:21</text>
<text x="553.6" y="679.9" font-size="10" letter-spacing="0.2" text-anchor="middle">14:21</text>
<text x="595.6" y="679.9" font-size="10" letter-spacing="0.2" text-anchor="middle">16:21</text>
<text x="637.6" y="679.9" font-size="10" letter-spacing="0.2" text-anchor="middle">18:21</text>
<text x="679.6" y="679.9" font-size="10" letter-spacing="0.2" text-anchor="middle">20:21</text>
<text x="721.6" y="679.9" font-size="10" letter-spacing="0.2" text-anchor="middle">22:21</text>
<text x="763.6" y="679.9" font-size="10" letter-spacing="0.2" text-anchor="middle">5/16</text>
<text x="805.6" y="679.9" font-size="10" letter-spacing="0.2" text-anchor="middle">2:21</text>
<text x="847.6" y="679.9" font-size="10" letter-spacing="0.2" text-anchor="middle">4:21</text>
<text x="889.6" y="679.9" font-size="10" letter-spacing="0.2" text-anchor="middle">6:21</text>
<text x="931.6" y="679.9" font-size="10" letter-spacing="0.2" text-anchor="middle">8:21</text>
<text x="973.6" y="679.9" font-size="10" letter-spacing="0.2" text-anchor="middle">10:21</text>
<text x="1015.6" y="679.9" font-size="10" letter-spacing="0.2" text-anchor="middle">12:21</text>
<text x="1057.6" y="679.9" font-size="10" letter-spacing="0.2" text-anchor="middle">14:21</text>
<text x="1099.6" y="679.9" font-size="10" letter-spacing="0.2" text-anchor="middle">16:21</text>
<text x="1141.6" y="679.9" font-size="10" letter-spacing="0.2" text-anchor="middle">18:21</text>
<text x="1183.6" y="679.9" font-size="10" letter-spacing="0.2" text-anchor="middle">20:21</text>
<text x="1225.6" y="679.9" font-size="10" letter-spacing="0.2" text-anchor="middle">22:21</text>
<text x="1267.6" y="679.9" font-size="10" letter-spacing="0.2" text-anchor="middle">5/17</text>
</g>
<g shape-rendering="crispEdges" fill="#c8c8c8">
<rect x="35" y="668" width="1" height="2"/>
<rect x="77" y="668" width="1" height="2"/>
<rect x="119" y="668" width="1" height="2"/>
<rect x="161" y="668" width="1" height="2"/>
<rect x="203" y="668" width="1" height="2"/>
<rect x="287" y="668" width="1" height="2"/>
<rect x="329" y="668" width="1" height="2"/>
<rect x="371" y="668" width="1" height="2"/>
<rect x="413" y="668" width="1" height="2"/>
<rect x="455" y="668" width="1" height="2"/>
<rect x="497" y="668" width="1" height="2"/>
<rect x="539" y="668" width="1" height="2"/>
<rect x="581" y="668" width="1" height="2"/>
<rect x="623" y="668" width="1" height="2"/>
<rect x="665" y="668" width="1" height="2"/>
<rect x="707" y="668" width="1" height="2"/>
<rect x="791" y="668" width="1" height="2"/>
<rect x="833" y="668" width="1" height="2"/>
<rect x="875" y="668" width="1" height="2"/>
<rect x="917" y="668" width="1" height="2"/>
<rect x="959" y="668" width="1" height="2"/>
<rect x="1001" y="668" width="1" height="2"/>
<rect x="1043" y="668" width="1" height="2"/>
<rect x="1085" y="668" width="1" height="2"/>
<rect x="1127" y="668" width="1" height="2"/>
<rect x="1169" y="668" width="1" height="2"/>
<rect x="1211" y="668" width="1" height="2"/>
<rect x="1295" y="668" width="1" height="2"/>
</g>
<text x="34.3" y="85" font-family="Liberation Sans, sans-serif" font-weight="bold" font-size="10.1" fill="#22e022">GBP A0-FX BID-20 min</text>
<rect x="147" y="74" width="522" height="14" fill="#fff"/>
<rect x="30" y="371" width="326" height="22" fill="#fff"/>
<rect x="35" y="521" width="174" height="16" fill="#fff"/>
</svg>
<svg class="abs" style="left:0;top:0;opacity:0.999" width="1366" height="768" viewBox="0 0 1366 768">
<g shape-rendering="crispEdges">
<rect x="42" y="45" width="1" height="25" fill="#fff"/><rect x="43" y="45" width="2" height="25" fill="#f0f0f0"/><rect x="44" y="45" width="1" height="25" fill="#a0a0a0"/><rect x="42" y="69" width="3" height="1" fill="#a0a0a0"/>
<rect x="46" y="45" width="1" height="25" fill="#fff"/><rect x="47" y="45" width="2" height="25" fill="#f0f0f0"/><rect x="48" y="45" width="1" height="25" fill="#a0a0a0"/><rect x="46" y="69" width="3" height="1" fill="#a0a0a0"/>
</g>
<polygon points="56.5,50.5 63.5,50.5 66.5,53.5 66.5,63.5 56.5,63.5" fill="#fff" stroke="#000" stroke-width="1.4"/>
<polyline points="63.5,50.5 63.5,53.5 66.5,53.5" fill="none" stroke="#000" stroke-width="1"/>
<polygon points="77.5,55.5 77.5,63.5 88,63.5 92,58.5 81.5,58.5 81.5,55.5" fill="#ffff80" stroke="#000" stroke-width="1"/>
<polygon points="78,63.5 81.5,58.5 92,58.5 88.5,63.5" fill="#808000" stroke="#000" stroke-width="1"/>
<polygon points="77.5,55.5 79,53.5 83,53.5 84.5,55.5 88.5,55.5 88.5,58" fill="#ffff80" stroke="#000" stroke-width="1"/>
<path d="M85.5,52.5 q3,-3 6,0 l0,2.5 m-2.2,-1.2 l2.2,1.5 l1.2,-2.3" fill="none" stroke="#000" stroke-width="1"/>
<polygon points="104.5,50.5 114.5,50.5 114.5,61.5 106.0,61.5 104.5,60.0" fill="#808000" stroke="#000" stroke-width="1.2"/>
<polygon points="102.5,52.0 112.5,52.0 112.5,63.0 104.0,63.0 102.5,61.5" fill="#808000" stroke="#000" stroke-width="1.2"/>
<polygon points="100.5,53.5 110.5,53.5 110.5,64.5 102.0,64.5 100.5,63.0" fill="#808000" stroke="#000" stroke-width="1.2"/>
<rect x="103" y="55" width="6" height="4.5" fill="#fff"/><rect x="103.5" y="61" width="5" height="3.5" fill="#000"/><rect x="107" y="62" width="1" height="1.5" fill="#fff"/>
<polygon points="122.5,56.5 122.5,63.5 136,63.5 136,55.5 128.5,55.5 127,53.5 124,53.5" fill="#808000" stroke="#000" stroke-width="1.3"/>
<polyline points="134,53.5 134,50.5 137.2,50.5" fill="none" stroke="#00008a" stroke-width="1.3"/><line x1="134" y1="50.5" x2="138" y2="54.5" stroke="#00008a" stroke-width="1.3"/>
<g shape-rendering="crispEdges"><rect x="146" y="47" width="1" height="22" fill="#a0a0a0"/><rect x="147" y="47" width="1" height="22" fill="#fff"/></g>
<g shape-rendering="crispEdges"><polygon points="155,50 164,50 168,54 168,65 155,65" fill="#fff" stroke="none" stroke-width="1"/><rect x="155" y="50" width="1" height="15" fill="#c0c0c0"/><rect x="155" y="50" width="9" height="1" fill="#c0c0c0"/><rect x="167" y="54" width="2" height="11" fill="#000"/><rect x="156" y="64" width="13" height="1" fill="#000"/><rect x="164" y="50" width="1" height="4" fill="#000"/><rect x="164" y="53" width="4" height="1" fill="#000"/><rect x="165" y="51" width="1" height="1" fill="#000"/><rect x="166" y="52" width="1" height="1" fill="#000"/><rect x="167" y="53" width="1" height="1" fill="#000"/></g>
<g shape-rendering="crispEdges"><rect x="153" y="55" width="13" height="8" fill="#00008a"/><rect x="154" y="58" width="11" height="4" fill="#fff"/><rect x="163" y="56" width="1" height="1" fill="#fff"/></g>
<g shape-rendering="crispEdges"><polygon points="177,50 186,50 190,54 190,65 177,65" fill="#fff" stroke="none" stroke-width="1"/><rect x="177" y="50" width="1" height="15" fill="#c0c0c0"/><rect x="177" y="50" width="9" height="1" fill="#c0c0c0"/><rect x="189" y="54" width="2" height="11" fill="#000"/><rect x="178" y="64" width="13" height="1" fill="#000"/><rect x="186" y="50" width="1" height="4" fill="#000"/><rect x="186" y="53" width="4" height="1" fill="#000"/><rect x="187" y="51" width="1" height="1" fill="#000"/><rect x="188" y="52" width="1" height="1" fill="#000"/><rect x="189" y="53" width="1" height="1" fill="#000"/></g>
<g shape-rendering="crispEdges"><rect x="180" y="59" width="1" height="5" fill="#008000"/><rect x="181" y="59" width="1" height="1" fill="#008000"/><rect x="183" y="56" width="1" height="6" fill="#008000"/><rect x="184" y="58" width="1" height="1" fill="#008000"/><rect x="186" y="54" width="1" height="8" fill="#008080"/><rect x="187" y="55" width="1" height="1" fill="#008080"/><rect x="182" y="61" width="1" height="1" fill="#008000"/></g>
<g shape-rendering="crispEdges"><polygon points="200,50 209,50 213,54 213,65 200,65" fill="#fff" stroke="none" stroke-width="1"/><rect x="200" y="50" width="1" height="15" fill="#c0c0c0"/><rect x="200" y="50" width="9" height="1" fill="#c0c0c0"/><rect x="212" y="54" width="2" height="11" fill="#000"/><rect x="201" y="64" width="13" height="1" fill="#000"/><rect x="209" y="50" width="1" height="4" fill="#000"/><rect x="209" y="53" width="4" height="1" fill="#000"/><rect x="210" y="51" width="1" height="1" fill="#000"/><rect x="211" y="52" width="1" height="1" fill="#000"/><rect x="212" y="53" width="1" height="1" fill="#000"/></g>
<circle cx="206.7" cy="58.5" r="4.3" fill="#10c010" stroke="#008000" stroke-width="1" stroke-dasharray="2 1"/><line x1="206" y1="59.5" x2="209.5" y2="56" stroke="#004000" stroke-width="1.2"/>
<g shape-rendering="crispEdges"><polygon points="223,50 232,50 236,54 236,65 223,65" fill="#fff" stroke="none" stroke-width="1"/><rect x="223" y="50" width="1" height="15" fill="#c0c0c0"/><rect x="223" y="50" width="9" height="1" fill="#c0c0c0"/><rect x="235" y="54" width="2" height="11" fill="#000"/><rect x="224" y="64" width="13" height="1" fill="#000"/><rect x="232" y="50" width="1" height="4" fill="#000"/><rect x="232" y="53" width="4" height="1" fill="#000"/><rect x="233" y="51" width="1" height="1" fill="#000"/><rect x="234" y="52" width="1" height="1" fill="#000"/><rect x="235" y="53" width="1" height="1" fill="#000"/></g>
<circle cx="232" cy="56.5" r="3.3" fill="#c0ffff" stroke="#404040" stroke-width="1" stroke-dasharray="1.5 1"/><line x1="229.5" y1="59" x2="225" y2="63.5" stroke="#40a0a0" stroke-width="2"/><line x1="229" y1="59.5" x2="224.5" y2="64" stroke="#000" stroke-width="0.8"/>
<g shape-rendering="crispEdges"><polygon points="246,50 255,50 259,54 259,65 246,65" fill="#fff" stroke="none" stroke-width="1"/><rect x="246" y="50" width="1" height="15" fill="#c0c0c0"/><rect x="246" y="50" width="9" height="1" fill="#c0c0c0"/><rect x="258" y="54" width="2" height="11" fill="#000"/><rect x="247" y="64" width="13" height="1" fill="#000"/><rect x="255" y="50" width="1" height="4" fill="#000"/><rect x="255" y="53" width="4" height="1" fill="#000"/><rect x="256" y="51" width="1" height="1" fill="#000"/><rect x="257" y="52" width="1" height="1" fill="#000"/><rect x="258" y="53" width="1" height="1" fill="#000"/></g>
<g shape-rendering="crispEdges"><rect x="252" y="53" width="2" height="9" fill="#e0d040"/><rect x="249" y="62" width="8" height="2" fill="#c8b820"/><rect x="248" y="55" width="10" height="1" fill="#806000"/><rect x="252" y="52" width="2" height="1" fill="#806000"/><rect x="248" y="56" width="1" height="4" fill="#000"/><rect x="257" y="56" width="1" height="4" fill="#000"/><rect x="247" y="59" width="3" height="1" fill="#000"/><rect x="256" y="59" width="3" height="1" fill="#000"/></g>
<g shape-rendering="crispEdges"><rect x="269" y="47" width="1" height="22" fill="#a0a0a0"/><rect x="270" y="47" width="1" height="22" fill="#fff"/></g>
<polygon points="279.5,54.5 281.5,50.5 289.5,50.5 288,54.5" fill="#fff" stroke="#000" stroke-width="1.2"/>
<line x1="282" y1="52.5" x2="288" y2="52.5" stroke="#000" stroke-width="0.8"/>
<path d="M278,54.5 h11 l2.5,2 v4.5 l-2.5,2.5 h-11 q-2,0 -2,-2 v-5 q0,-2 2,-2 z" fill="#fff" stroke="#000" stroke-width="1.3"/>
<rect x="277.5" y="58.5" width="11" height="1.4" fill="#000"/><rect x="282" y="60" width="4" height="1.2" fill="#e8e820"/><rect x="277.5" y="61.2" width="11" height="1" fill="#000"/><line x1="289" y1="54.5" x2="289" y2="63.5" stroke="#000" stroke-width="1"/>
<g shape-rendering="crispEdges"><rect x="300" y="47" width="1" height="22" fill="#a0a0a0"/><rect x="301" y="47" width="1" height="22" fill="#fff"/></g>
<rect x="307.5" y="53.5" width="10" height="10" fill="#fff"/><rect x="307.5" y="53.5" width="10.5" height="10.5" fill="#fff" stroke="#000" stroke-width="1.4"/>
<rect x="309" y="58.5" width="2" height="1" fill="#000"/><rect x="312" y="58.5" width="5" height="1" fill="#000"/><rect x="309" y="61" width="2" height="1" fill="#000"/><rect x="312" y="61" width="5" height="1" fill="#000"/>
<polygon points="309.5,55.5 313.5,51 317,55 320,51 322.5,51" fill="#fff" stroke="#000" stroke-width="1"/><polygon points="319,50.5 323.5,50 323.5,56" fill="#00008a" stroke="none" stroke-width="1"/>
<path d="M311,55 l2.5,-3 l3,3.5" fill="none" stroke="#000" stroke-width="1" stroke-dasharray="1 1"/>
<g shape-rendering="crispEdges"><rect x="331" y="47" width="1" height="22" fill="#a0a0a0"/><rect x="332" y="47" width="1" height="22" fill="#fff"/></g>
<polygon points="338.5,56.5 345.5,50.5 345.5,62.5" fill="#00008a" stroke="none" stroke-width="1"/>
<rect x="346.5" y="53.5" width="7.5" height="6" fill="#e8e8e8"/><rect x="346.5" y="53.5" width="7.5" height="6" fill="#f4f4f4" stroke="#b0b0b0" stroke-width="1"/><rect x="348.5" y="55" width="1" height="2.5" fill="#606060"/><rect x="350.5" y="55" width="1" height="2.5" fill="#606060"/><rect x="352" y="55" width="1" height="2.5" fill="#606060"/>
<path d="M347,61 h5 q2,0 2,-1.5 M347,63 h7" stroke="#00008a" fill="none" stroke-width="1.1"/>
<rect x="362" y="56" width="12" height="5.5" fill="#f4f4f4"/><rect x="362" y="56" width="12" height="5.5" fill="#f4f4f4" stroke="#b0b0b0"/>
<rect x="364" y="57.5" width="1" height="2.8" fill="#606060"/>
<rect x="366.5" y="57.5" width="1" height="2.8" fill="#606060"/>
<rect x="369" y="57.5" width="1" height="2.8" fill="#606060"/>
<rect x="371.5" y="57.5" width="1" height="2.8" fill="#606060"/>
<path d="M363.5,55.5 l5,-4.5 l4.5,4.5" fill="#fff" stroke="#000" stroke-width="1" stroke-dasharray="1 0.7"/>
<polygon points="372.5,50.5 377.5,50 377.5,56.5" fill="#00008a" stroke="none" stroke-width="1"/>
<path d="M361,62.5 h13 M376.5,57 v7 h-9" stroke="#00008a" fill="none" stroke-width="1.3"/>
<rect x="385" y="53.5" width="8" height="6" fill="#f4f4f4"/><rect x="385" y="53.5" width="8" height="6" fill="#f4f4f4" stroke="#b0b0b0"/><rect x="387" y="55" width="1" height="2.5" fill="#606060"/><rect x="389" y="55" width="1" height="2.5" fill="#606060"/><rect x="391" y="55" width="1" height="2.5" fill="#606060"/>
<polygon points="393.5,50.5 400,56.5 393.5,62.5" fill="#00008a" stroke="none" stroke-width="1"/>
<path d="M384,61 h5 q2,0 2,1 M384,63.2 h6.5" stroke="#00008a" fill="none" stroke-width="1.1"/>
<g shape-rendering="crispEdges"><rect x="408" y="47" width="1" height="22" fill="#a0a0a0"/><rect x="409" y="47" width="1" height="22" fill="#fff"/></g>
<rect x="423" y="50.5" width="7.5" height="10" fill="#ffff80" stroke="#000" stroke-width="1.3"/>
<rect x="424.5" y="52.5" width="2" height="1.2" fill="#000"/><rect x="427.5" y="52.5" width="2" height="1.2" fill="#000"/><rect x="424.5" y="55" width="2" height="1.2" fill="#000"/><rect x="427.5" y="55" width="2" height="1.2" fill="#000"/><rect x="427.5" y="57.5" width="2" height="1.2" fill="#000"/>
<rect x="420" y="57" width="8" height="4.5" fill="#f8f8f8" stroke="#a8a8a8"/>
<rect x="422" y="58.3" width="1" height="2" fill="#606060"/><rect x="424" y="58.3" width="1" height="2" fill="#606060"/><rect x="426" y="58.3" width="1" height="2" fill="#606060"/>
<rect x="415.5" y="59.5" width="5" height="3.5" fill="#f8f8f8" stroke="#a8a8a8"/>
<path d="M421,62 h6 M415,64.3 h9" stroke="#00008a" fill="none" stroke-width="1.3"/>
<rect x="417.5" y="50" width="2" height="6" fill="#0000c0"/><rect x="415.5" y="52" width="6" height="2" fill="#0000c0"/>
<rect x="446" y="50.5" width="7.5" height="10" fill="#ffff80" stroke="#000" stroke-width="1.3"/>
<rect x="447.5" y="52.5" width="2" height="1.2" fill="#000"/><rect x="450.5" y="52.5" width="2" height="1.2" fill="#000"/><rect x="447.5" y="55" width="2" height="1.2" fill="#000"/><rect x="450.5" y="55" width="2" height="1.2" fill="#000"/><rect x="450.5" y="57.5" width="2" height="1.2" fill="#000"/>
<rect x="443" y="57" width="8" height="4.5" fill="#f8f8f8" stroke="#a8a8a8"/>
<rect x="445" y="58.3" width="1" height="2" fill="#606060"/><rect x="447" y="58.3" width="1" height="2" fill="#606060"/><rect x="449" y="58.3" width="1" height="2" fill="#606060"/>
<rect x="438.5" y="59.5" width="5" height="3.5" fill="#f8f8f8" stroke="#a8a8a8"/>
<path d="M444,62 h6 M438,64.3 h9" stroke="#00008a" fill="none" stroke-width="1.3"/>
<path d="M438.7,55.5 v-5 l2.3,3 l2.3,-3 v5" fill="none" stroke="#00008a" stroke-width="1.3"/>
<g shape-rendering="crispEdges"><rect x="462" y="47" width="1" height="22" fill="#a0a0a0"/><rect x="463" y="47" width="1" height="22" fill="#fff"/></g>
<circle cx="474.5" cy="55" r="4.6" fill="#fff" stroke="#000" stroke-width="1.5"/><polyline points="474.5,51.5 474.5,55 477.5,57.5" fill="none" stroke="#000" stroke-width="1.1"/>
<path d="M470.5,61.5 v3 M473.5,60.5 v4 M477,58.5 v6 M480,55 v7 M482.5,51 v8" stroke="#00008a" stroke-width="1.2" fill="none"/>
<polygon points="480,57 482,54 482,60" fill="#2020c0" stroke="none" stroke-width="1"/><polygon points="477,62 479,59 479,64" fill="#2020c0" stroke="none" stroke-width="1"/>
<g shape-rendering="crispEdges">
<rect x="492" y="50" width="15" height="14" fill="#fff"/><rect x="492" y="50" width="1" height="14" fill="#c0c0c0"/><rect x="506" y="50" width="2" height="15" fill="#000"/><rect x="492" y="64" width="16" height="1" fill="#000"/>
<rect x="493" y="50" width="7" height="2" fill="#00008a"/><rect x="500" y="50" width="6" height="2" fill="#a8a8a8"/>
<rect x="501" y="54" width="4" height="4" fill="#900000"/><rect x="502" y="55" width="2" height="2" fill="#fff"/>
<rect x="495" y="55" width="2" height="2" fill="#f0f0f0"/>
<rect x="498" y="55" width="2" height="2" fill="#f0f0f0"/>
<rect x="495" y="59" width="2" height="2" fill="#f0f0f0"/>
<rect x="498" y="59" width="2" height="2" fill="#f0f0f0"/>
</g>
<g shape-rendering="crispEdges">
<rect x="515" y="50" width="15" height="14" fill="#fff"/><rect x="515" y="50" width="1" height="14" fill="#c0c0c0"/><rect x="529" y="50" width="2" height="15" fill="#000"/><rect x="515" y="64" width="16" height="1" fill="#000"/>
<rect x="516" y="50" width="7" height="2" fill="#00008a"/><rect x="523" y="50" width="6" height="2" fill="#a8a8a8"/>
<rect x="516" y="54" width="13" height="1" fill="#900000"/><rect x="516" y="58" width="13" height="1" fill="#900000"/>
<rect x="518" y="55" width="1" height="3" fill="#900000"/>
<rect x="521" y="55" width="1" height="3" fill="#900000"/>
<rect x="524" y="55" width="1" height="3" fill="#900000"/>
<rect x="527" y="55" width="1" height="3" fill="#900000"/>
<rect x="516" y="60" width="13" height="1" fill="#e4e4e4"/>
</g>
<g shape-rendering="crispEdges">
<rect x="538" y="50" width="15" height="14" fill="#fff"/><rect x="538" y="50" width="1" height="14" fill="#c0c0c0"/><rect x="552" y="50" width="2" height="15" fill="#000"/><rect x="538" y="64" width="16" height="1" fill="#000"/>
<rect x="539" y="50" width="7" height="2" fill="#00008a"/><rect x="546" y="50" width="6" height="2" fill="#a8a8a8"/>
<rect x="539" y="52" width="13" height="12" fill="#900000"/>
<rect x="540" y="53" width="2" height="2" fill="#fff"/>
<rect x="543" y="53" width="2" height="2" fill="#fff"/>
<rect x="546" y="53" width="2" height="2" fill="#fff"/>
<rect x="549" y="53" width="2" height="2" fill="#fff"/>
<rect x="540" y="56" width="2" height="2" fill="#fff"/>
<rect x="543" y="56" width="2" height="2" fill="#fff"/>
<rect x="546" y="56" width="2" height="2" fill="#fff"/>
<rect x="549" y="56" width="2" height="2" fill="#fff"/>
<rect x="540" y="59" width="2" height="2" fill="#fff"/>
<rect x="543" y="59" width="2" height="2" fill="#fff"/>
<rect x="546" y="59" width="2" height="2" fill="#fff"/>
<rect x="549" y="59" width="2" height="2" fill="#fff"/>
<rect x="540" y="62" width="2" height="1.5" fill="#fff"/>
<rect x="543" y="62" width="2" height="1.5" fill="#fff"/>
<rect x="546" y="62" width="2" height="1.5" fill="#fff"/>
<rect x="549" y="62" width="2" height="1.5" fill="#fff"/>
</g>
<g shape-rendering="crispEdges"><rect x="562" y="47" width="1" height="22" fill="#a0a0a0"/><rect x="563" y="47" width="1" height="22" fill="#fff"/></g>
<g shape-rendering="crispEdges"><rect x="571" y="50" width="11" height="13" fill="#fff"/><rect x="570" y="50" width="12" height="1" fill="#000"/><rect x="570" y="50" width="1" height="6" fill="#000"/><rect x="581" y="50" width="1" height="6" fill="#000"/><rect x="582" y="50" width="1" height="15" fill="#b0b0b0"/><rect x="571" y="64" width="12" height="1" fill="#b0b0b0"/>
<rect x="574" y="51" width="1" height="12" fill="#c0c0c0"/>
<rect x="578" y="51" width="1" height="12" fill="#c0c0c0"/>
<rect x="571" y="53" width="10" height="1" fill="#c0c0c0"/>
<rect x="571" y="56" width="10" height="1" fill="#c0c0c0"/>
</g>
<polyline points="569.5,57.5 572,58.5 575.5,62.5 580,55 584.5,60" fill="none" stroke="#900000" stroke-width="1.4"/><polyline points="570,62.5 575,57.5 578,55 581.5,60 583,62" fill="none" stroke="#0000a0" stroke-width="1.4"/>
<g shape-rendering="crispEdges"><rect x="596" y="54" width="12" height="10" fill="#fff"/><rect x="595" y="53" width="13" height="1" fill="#000"/><rect x="595" y="53" width="1" height="11" fill="#000"/><rect x="607" y="53" width="1" height="11" fill="#000"/><rect x="595" y="63" width="13" height="1" fill="#000"/><rect x="599" y="54" width="8" height="3" fill="#0000d0"/><rect x="596" y="57" width="11" height="1" fill="#000"/>
<rect x="599" y="58" width="1" height="5" fill="#b0b0b0"/>
<rect x="603" y="58" width="1" height="5" fill="#b0b0b0"/>
<rect x="596" y="60" width="11" height="1" fill="#b0b0b0"/></g>
<polygon points="599,49.5 603.5,49.5 599,53.5 601.5,53.5 593,60.5 596,55.5 593.5,55.5" fill="#ffff00" stroke="#000" stroke-width="0.9"/>
<g shape-rendering="crispEdges"><rect x="616" y="47" width="1" height="22" fill="#a0a0a0"/><rect x="617" y="47" width="1" height="22" fill="#fff"/></g>
<path d="M629.5,50 v9 M633.5,55 v9" stroke="#2020d0" stroke-width="1.3" fill="none"/>
<path d="M623.5,57.5 h4.5 m-2,-2 l2,2 l-2,2 M639,57.5 h-4.5 m2,-2 l-2,2 l2,2" stroke="#000" stroke-width="1.1" fill="none"/>
<path d="M646.5,50 v10 M661.5,55 v9" stroke="#2020d0" stroke-width="1.3" fill="none"/>
<path d="M648.5,57.5 h4.5 m-2.5,-2 l-2,2 l2,2 M655.5,57.5 h4.5 m-2,-2 l2,2 l-2,2" stroke="#000" stroke-width="1.1" fill="none"/>
<g shape-rendering="crispEdges"><rect x="670" y="47" width="1" height="22" fill="#a0a0a0"/><rect x="671" y="47" width="1" height="22" fill="#fff"/></g>
<circle cx="683.8" cy="56" r="4.9" fill="#f8ffff" stroke="#000" stroke-width="1.5"/><rect x="681" y="55.2" width="5.6" height="1.6" fill="#000"/><rect x="683" y="53.2" width="1.6" height="5.6" fill="#000"/>
<line x1="687.5" y1="60" x2="692.5" y2="64.5" stroke="#00008a" stroke-width="2.2"/>
<circle cx="706.8" cy="56" r="4.9" fill="#f4f4f4" stroke="#a8a8a8" stroke-width="1.5"/><rect x="704" y="55.2" width="5.6" height="1.6" fill="#a8a8a8"/>
<line x1="710.5" y1="60" x2="715.5" y2="64.5" stroke="#a8a8a8" stroke-width="2.2"/>
<g shape-rendering="crispEdges"><rect x="724" y="47" width="1" height="22" fill="#a0a0a0"/><rect x="725" y="47" width="1" height="22" fill="#fff"/></g>
<line x1="735" y1="64" x2="745.5" y2="53" stroke="#000" stroke-width="3"/><line x1="735" y1="64" x2="745.5" y2="53" stroke="#e8e070" stroke-width="1.2"/>
<line x1="737" y1="55" x2="744.5" y2="63.5" stroke="#700000" stroke-width="2.2"/>
<path d="M731.5,57 l3.5,-4.5 q3,-1.5 5,0 l-2,1.2 l1.5,2 l-2.5,2 l-1.5,-2 l-2,2.2 z" fill="#808000" stroke="#202000" stroke-width="0.9"/>
<g shape-rendering="crispEdges"><rect x="751" y="47" width="22" height="21" fill="#f8f8f8"/><rect x="751" y="47" width="22" height="1" fill="#a0a0a0"/><rect x="751" y="47" width="1" height="21" fill="#a0a0a0"/><rect x="772" y="47" width="1" height="21" fill="#fff"/><rect x="751" y="67" width="22" height="1" fill="#fff"/></g>
<path d="M759.5,51.5 v12 l3,-3 l2.2,4.5 l1.8,-0.9 l-2.2,-4.4 h4 z" fill="#fff" stroke="#000" stroke-width="1.1"/>
<text x="779.6" y="58" font-family="Liberation Sans, sans-serif" font-weight="bold" font-size="10" fill="#000">G</text><rect x="788.7" y="51" width="1.3" height="14" fill="#000"/>
<polygon points="803,55 809,50.5 815,52 816,58 810,60 806,58" fill="#a0a0a0" stroke="none" stroke-width="1"/>
<path d="M801.5,54.5 v9.5 l2.2,-2.2 l1.6,3.2 l1.2,-0.6 l-1.6,-3.2 h3 z" fill="#f4f4f4" stroke="#a8a8a8" stroke-width="1"/>
<g shape-rendering="crispEdges"><rect x="826" y="44" width="1" height="28" fill="#a0a0a0"/><rect x="827" y="44" width="1" height="28" fill="#fff"/></g>
<g shape-rendering="crispEdges">
<rect x="29" y="74" width="1" height="369" fill="#fff"/><rect x="30" y="74" width="1" height="369" fill="#e0e0e0"/><rect x="31" y="74" width="2" height="627" fill="#8c8c8c"/><rect x="0" y="443" width="30" height="1" fill="#fff"/>
<rect x="1" y="78" width="27" height="1" fill="#fff"/><rect x="1" y="79" width="27" height="1" fill="#a8a8a8"/><rect x="27" y="77" width="1" height="2" fill="#a8a8a8"/>
<rect x="1" y="82" width="27" height="1" fill="#fff"/><rect x="1" y="83" width="27" height="1" fill="#a8a8a8"/><rect x="27" y="81" width="1" height="2" fill="#a8a8a8"/>
<rect x="6" y="156" width="16" height="1" fill="#000"/>
<rect x="6" y="160" width="16" height="1" fill="#000"/>
<rect x="6" y="164" width="16" height="1" fill="#000"/>
<rect x="6" y="168" width="16" height="1" fill="#000"/>
<rect x="7" y="177" width="14" height="14" fill="#000"/><rect x="8" y="178" width="12" height="12" fill="#f0f0f0"/>
<rect x="6" y="264" width="1" height="15" fill="#000"/>
<rect x="8" y="264" width="1" height="15" fill="#000"/>
<rect x="11" y="264" width="1" height="15" fill="#000"/>
<rect x="15" y="264" width="1" height="15" fill="#000"/>
<rect x="21" y="264" width="1" height="15" fill="#000"/>
<rect x="13" y="286" width="1" height="15" fill="#000"/>
<rect x="6" y="212" width="15" height="1" fill="#000"/><rect x="6" y="234" width="16" height="1" fill="#000"/>
<rect x="13" y="403" width="3" height="6" fill="#0000e0"/><rect x="13" y="421" width="3" height="6" fill="#e00000"/>
</g>
<line x1="6" y1="101.5" x2="14" y2="101.5" stroke="#000" stroke-width="1.2"/>
<polygon points="14,101.5 15,98.5 19.5,90 22,91.3 17.5,99.8" fill="#f0e878" stroke="#000" stroke-width="1.1"/><polygon points="19.5,90 20.3,89 22.5,90 22,91.3" fill="#000" stroke="none" stroke-width="1"/>
<line x1="8" y1="117.5" x2="20" y2="117.5" stroke="#000" stroke-width="1.2"/><polygon points="7,117.5 10.5,115 10.5,120" fill="#000" stroke="none" stroke-width="1"/><polygon points="21,117.5 17.5,115 17.5,120" fill="#000" stroke="none" stroke-width="1"/>
<text transform="translate(6.8,144) scale(0.72,1)" font-family="Liberation Sans, sans-serif" font-size="13" fill="#000">abc</text>
<line x1="7" y1="211.5" x2="21" y2="198" stroke="#000" stroke-width="1.1" stroke-dasharray="1 1.6"/>
<line x1="7" y1="211.5" x2="21" y2="206" stroke="#000" stroke-width="1.1" stroke-dasharray="1 1.6"/>
<line x1="7" y1="211.5" x2="21" y2="210" stroke="#000" stroke-width="1.1" stroke-dasharray="1 1.6"/>
<line x1="7" y1="234" x2="22" y2="220" stroke="#000" stroke-width="1.1"/>
<line x1="9" y1="233.5" x2="22" y2="228" stroke="#000" stroke-width="1.1" stroke-dasharray="1.2 1.3"/>
<line x1="9" y1="233.5" x2="22" y2="232" stroke="#000" stroke-width="1.1" stroke-dasharray="1.2 1.3"/>
<path d="M7,258 v-6 a7.3,8 0 0 1 14.6,0 v6 M7,252.5 a2.4,2.6 0 0 1 4.8,0 v4 M11.8,252.5 a2.5,2.6 0 0 1 5,0 v4 M16.8,252.5 a2.4,2.6 0 0 1 4.8,0" fill="none" stroke="#000" stroke-width="1.1"/>
<text transform="translate(5.8,319.9) scale(0.8,1)" font-family="Liberation Sans, sans-serif" font-size="11.7" fill="#000">%R</text>
<path d="M7.5,343 v-2.5 a6,6 0 0 1 12,0 v2.5 M10.8,343 v-2 a2.8,3 0 0 1 5.6,0 v2" fill="none" stroke="#000" stroke-width="1.1"/><line x1="12" y1="342.5" x2="22" y2="333" stroke="#000" stroke-width="1.1"/>
<path d="M18.7,354 q1,9 -10.7,10.5" fill="none" stroke="#000" stroke-width="1.1"/>
<ellipse cx="14.5" cy="382" rx="7" ry="5.6" fill="none" stroke="#000" stroke-width="1.1"/>
<polygon points="14.5,399 18.5,403.5 10.5,403.5" fill="#0000e0" stroke="none" stroke-width="1"/><polygon points="14.5,431.5 18.5,427 10.5,427" fill="#e00000" stroke="none" stroke-width="1"/>
<g shape-rendering="crispEdges"><rect x="0" y="3" width="15" height="15" fill="#1414b4"/><rect x="15" y="4" width="1" height="15" fill="#808080"/><rect x="0" y="18" width="16" height="1" fill="#808080"/></g>
<path d="M1,17 h4 v-1.5 q-3,-3 -1,-8 q1.5,-3 4,-3 q3,0 4.5,3 q1.5,4.5 -1.5,8 v1.5 h4 v-2 h-1.8 q2.5,-4 1,-8 q-1.5,-4 -6,-4 q-4.5,0 -6,4 q-1.5,4.5 1,8 h-1.8 z" fill="#fff"/>
<ellipse cx="8" cy="10" rx="1.6" ry="4.2" fill="#fff"/>
<text x="21.4" y="15" font-family="Liberation Sans, sans-serif" font-size="12.3" fill="#000">Omega R</text>
<g shape-rendering="crispEdges">
<polygon points="10,24 19,24 22,27 22,38 10,38" fill="#fff" stroke="none" stroke-width="1"/>
<rect x="7" y="24" width="9" height="8" fill="#10108c"/><rect x="14" y="30" width="8" height="8" fill="#909090"/><rect x="10" y="33" width="4" height="5" fill="#fff"/><rect x="22" y="27" width="1" height="12" fill="#000"/><rect x="10" y="38" width="13" height="1" fill="#000"/>
<rect x="8" y="26" width="2" height="4" fill="#fff"/><rect x="11" y="25" width="1" height="5" fill="#fff"/><rect x="13" y="27" width="2" height="4" fill="#fff"/><rect x="15" y="32" width="2" height="5" fill="#fff"/><rect x="18" y="33" width="2" height="3" fill="#e8e8e8"/>
</g>
<polyline points="19,24 19,27 22,27" fill="none" stroke="#404040" stroke-width="1"/><line x1="19" y1="24" x2="22.5" y2="27.5" stroke="#404040" stroke-width="1"/>
<defs><linearGradient id="gb" x1="0" y1="0" x2="0" y2="1"><stop offset="0" stop-color="#f2f2f2"/><stop offset="0.45" stop-color="#e2e2e2"/><stop offset="0.46" stop-color="#c6c6c6"/><stop offset="1" stop-color="#d8d8d8"/></linearGradient><linearGradient id="gr" x1="0" y1="0" x2="0" y2="1"><stop offset="0" stop-color="#eab0a0"/><stop offset="0.45" stop-color="#e08468"/><stop offset="0.46" stop-color="#c83818"/><stop offset="1" stop-color="#e07858"/></linearGradient><clipPath id="wc"><path d="M1260.5,-2 V13.5 a4,4 0 0 0 4,4 H1358.5 a4,4 0 0 0 4,-4 V-2 z"/></clipPath></defs>
<g clip-path="url(#wc)"><rect x="1260" y="0" width="56" height="18" fill="url(#gb)"/><rect x="1315" y="0" width="48" height="18" fill="url(#gr)"/></g>
<path d="M1260.5,-2 V13.5 a4,4 0 0 0 4,4 H1358.5 a4,4 0 0 0 4,-4 V-2" fill="none" stroke="#5a5a5a" stroke-width="1"/>
<line x1="1288.5" y1="0" x2="1288.5" y2="17" stroke="#6a6a6a" stroke-width="1"/><line x1="1289.5" y1="0" x2="1289.5" y2="17" stroke="#f4f4f4" stroke-width="1"/><line x1="1315.5" y1="0" x2="1315.5" y2="17" stroke="#6a3030" stroke-width="1"/>
<rect x="1269.5" y="8.5" width="11" height="4" fill="#fff" stroke="#484848" stroke-width="1" rx="0.8"/>
<rect x="1297.5" y="2.5" width="9" height="9" fill="#e4e4e4" stroke="#484848" stroke-width="1.1" rx="1"/>
<rect x="1295.5" y="4.8" width="9" height="9" fill="#f6f6f6" stroke="#484848" stroke-width="1.1" rx="1"/>
<rect x="1298.7" y="8" width="2.6" height="2.6" fill="#fff" stroke="#484848" stroke-width="1"/>
<path d="M1335,4 L1343.5,12 M1343.5,4 L1335,12" stroke="#5a2a20" stroke-width="4.2" stroke-linecap="butt"/>
<path d="M1335,4 L1343.5,12 M1343.5,4 L1335,12" stroke="#fff" stroke-width="2.6" stroke-linecap="butt"/>
<rect x="1309.5" y="23.5" width="17" height="17" fill="#dce8f5" stroke="#b4cce4" stroke-width="1"/>
<rect x="1328.5" y="23.5" width="17" height="17" fill="#dce8f5" stroke="#b4cce4" stroke-width="1"/>
<rect x="1347.5" y="23.5" width="17" height="17" fill="#dce8f5" stroke="#b4cce4" stroke-width="1"/>
<rect x="1314" y="33.6" width="6" height="2" fill="#4a5a78"/>
<rect x="1336" y="29.3" width="4.6" height="3.6" fill="none" stroke="#4a5a78" stroke-width="1.2"/><rect x="1335.4" y="28.6" width="5.8" height="1.4" fill="#4a5a78"/>
<rect x="1333.6" y="32.2" width="5" height="3.6" fill="#dce8f5" stroke="#4a5a78" stroke-width="1.2"/><rect x="1333" y="31.5" width="6.2" height="1.4" fill="#4a5a78"/>
<path d="M1353.3,29.5 L1359.7,35.6 M1359.7,29.5 L1353.3,35.6" stroke="#4a5a78" stroke-width="2"/>
<polygon points="38.7,691.3 43,687.8 43,694.8" fill="#404040" stroke="none" stroke-width="1"/>
<defs><linearGradient id="th" x1="0" y1="0" x2="0" y2="1"><stop offset="0" stop-color="#f4f4f4"/><stop offset="0.5" stop-color="#e4e4e4"/><stop offset="0.55" stop-color="#d0d0d0"/><stop offset="1" stop-color="#c8c8c8"/></linearGradient></defs>
<rect x="1331.5" y="684.5" width="14" height="14" rx="1.5" fill="url(#th)" stroke="#9a9a9a" stroke-width="1"/>
<polygon points="1358,691.5 1354,688 1354,695" fill="#303030" stroke="none" stroke-width="1"/>
<g shape-rendering="crispEdges"><rect x="1245" y="702" width="121" height="1" fill="#000"/><rect x="1364" y="74" width="2" height="628" fill="#fff"/><rect x="1245" y="701" width="121" height="1" fill="#fff"/></g>
<g shape-rendering="crispEdges">
<rect x="31" y="701" width="72" height="2" fill="#6c6c6c"/>
<rect x="31" y="703" width="18" height="16" fill="#f0f0f0"/><rect x="31" y="703" width="16" height="1" fill="#fff"/><rect x="31" y="703" width="1" height="15" fill="#fff"/><rect x="47" y="703" width="2" height="16" fill="#a0a0a0"/><rect x="31" y="717" width="18" height="2" fill="#a0a0a0"/>
<rect x="49" y="703" width="18" height="16" fill="#f0f0f0"/><rect x="49" y="703" width="16" height="1" fill="#fff"/><rect x="49" y="703" width="1" height="15" fill="#fff"/><rect x="65" y="703" width="2" height="16" fill="#a0a0a0"/><rect x="49" y="717" width="18" height="2" fill="#a0a0a0"/>
<rect x="67" y="703" width="18" height="16" fill="#f0f0f0"/><rect x="67" y="703" width="16" height="1" fill="#fff"/><rect x="67" y="703" width="1" height="15" fill="#fff"/><rect x="83" y="703" width="2" height="16" fill="#a0a0a0"/><rect x="67" y="717" width="18" height="2" fill="#a0a0a0"/>
<rect x="85" y="703" width="18" height="16" fill="#f0f0f0"/><rect x="85" y="703" width="16" height="1" fill="#fff"/><rect x="85" y="703" width="1" height="15" fill="#fff"/><rect x="101" y="703" width="2" height="16" fill="#a0a0a0"/><rect x="85" y="717" width="18" height="2" fill="#a0a0a0"/>
<rect x="0" y="717" width="31" height="1" fill="#a0a0a0"/><rect x="103" y="702" width="2" height="5" fill="#202020"/>
</g>
<rect x="36" y="705.5" width="1.3" height="9.5" fill="#a6a6a6"/><polygon points="44,705.5 44,715 38,710.2" fill="#a6a6a6" stroke="none" stroke-width="1"/>
<polygon points="60,705.5 60,715 54,710.2" fill="#a6a6a6" stroke="none" stroke-width="1"/>
<polygon points="73,705.5 73,715 79,710.2" fill="#a6a6a6" stroke="none" stroke-width="1"/>
<polygon points="89.5,705.5 89.5,715 95.5,710.2" fill="#a6a6a6" stroke="none" stroke-width="1"/><rect x="96.2" y="705.5" width="1.3" height="9.5" fill="#a6a6a6"/>
<text x="2.8" y="733.8" font-family="Liberation Sans, sans-serif" font-size="12" letter-spacing="-0.47" fill="#000">For Help, press F1</text>
<g shape-rendering="crispEdges"><rect x="1245" y="721" width="121" height="1" fill="#a0a0a0"/><rect x="1245" y="721" width="1" height="16" fill="#a0a0a0"/><rect x="1245" y="736" width="121" height="1" fill="#fff"/></g>
<text x="1247" y="733.8" font-family="Liberation Sans, sans-serif" font-size="12" letter-spacing="-0.52" fill="#000">17.05.2012 6:30 (GMT)</text>
<text x="30" y="36" font-family="Liberation Sans, sans-serif" font-size="12" letter-spacing="-0.35" fill="#000">File</text><text x="62" y="36" font-family="Liberation Sans, sans-serif" font-size="12" letter-spacing="-0.35" fill="#000">View</text><text x="101" y="36" font-family="Liberation Sans, sans-serif" font-size="12" letter-spacing="-0.35" fill="#000">Insert</text><text x="144" y="36" font-family="Liberation Sans, sans-serif" font-size="12" letter-spacing="-0.35" fill="#000">Format</text><text x="196" y="36" font-family="Liberation Sans, sans-serif" font-size="12" letter-spacing="-0.35" fill="#000">Drawing</text><text x="253.5" y="36" font-family="Liberation Sans, sans-serif" font-size="12" letter-spacing="-0.35" fill="#000">Internet</text><text x="309.5" y="36" font-family="Liberation Sans, sans-serif" font-size="12" letter-spacing="-0.35" fill="#000">Go</text><text x="338" y="36" font-family="Liberation Sans, sans-serif" font-size="12" letter-spacing="-0.35" fill="#000">Window</text><text x="396" y="36" font-family="Liberation Sans, sans-serif" font-size="12" letter-spacing="-0.35" fill="#000">Help</text>
<defs><radialGradient id="orb" cx="0.5" cy="0.35" r="0.75"><stop offset="0" stop-color="#8cb8d8"/><stop offset="0.4" stop-color="#3a7cb4"/><stop offset="0.75" stop-color="#0c4c8c"/><stop offset="1" stop-color="#16a8dc"/></radialGradient><radialGradient id="orb2" cx="0.5" cy="1" r="0.6"><stop offset="0" stop-color="#20e0ff" stop-opacity="0.95"/><stop offset="1" stop-color="#20c0ff" stop-opacity="0"/></radialGradient></defs>
<circle cx="27" cy="751.5" r="18" fill="url(#orb)" stroke="#27527c" stroke-width="1"/>
<circle cx="27" cy="751.5" r="17.5" fill="url(#orb2)"/>
<ellipse cx="27" cy="742" rx="14" ry="7.5" fill="#fff" opacity="0.22"/>
<path d="M19.3,741 q4.5,-2.2 8.3,0.3 l-1.4,8.3 q-4,-2 -8.6,0.4 z" fill="#ea5a2a"/>
<path d="M28.9,742.2 q4.6,2.4 9.6,-0.6 l-1.8,8.6 q-4.4,2.6 -9.2,0.2 z" fill="#8cc640"/>
<path d="M17.2,751.2 q4.4,-2.2 8.4,0 l-1.5,7.6 q-4,-1.8 -8.5,0.6 z" fill="#3a9ae2"/>
<path d="M26.8,752.4 q4.4,2.4 9.2,-0.2 l-1.7,8 q-4.3,2.4 -8.9,0 z" fill="#f8c430"/>
<rect x="58.2" y="743.4" width="1.6" height="1.6" fill="#484848" opacity="1"/><rect x="59.2" y="744.4" width="1.2" height="1.2" fill="#dcdcdc" opacity="0.8"/>
<rect x="61.3" y="743.4" width="1.6" height="1.6" fill="#484848" opacity="1"/><rect x="62.3" y="744.4" width="1.2" height="1.2" fill="#dcdcdc" opacity="0.8"/>
<rect x="64.4" y="743.4" width="1.6" height="1.6" fill="#484848" opacity="1"/><rect x="65.4" y="744.4" width="1.2" height="1.2" fill="#dcdcdc" opacity="0.8"/>
<rect x="58.2" y="747.4" width="1.6" height="1.6" fill="#484848" opacity="1"/><rect x="59.2" y="748.4" width="1.2" height="1.2" fill="#dcdcdc" opacity="0.8"/>
<rect x="61.3" y="747.4" width="1.6" height="1.6" fill="#484848" opacity="1"/><rect x="62.3" y="748.4" width="1.2" height="1.2" fill="#dcdcdc" opacity="0.8"/>
<rect x="64.4" y="747.4" width="1.6" height="1.6" fill="#484848" opacity="1"/><rect x="65.4" y="748.4" width="1.2" height="1.2" fill="#dcdcdc" opacity="0.8"/>
<rect x="58.2" y="751.4" width="1.6" height="1.6" fill="#484848" opacity="1"/><rect x="59.2" y="752.4" width="1.2" height="1.2" fill="#dcdcdc" opacity="0.8"/>
<rect x="61.3" y="751.4" width="1.6" height="1.6" fill="#484848" opacity="1"/><rect x="62.3" y="752.4" width="1.2" height="1.2" fill="#dcdcdc" opacity="0.8"/>
<rect x="64.4" y="751.4" width="1.6" height="1.6" fill="#484848" opacity="1"/><rect x="65.4" y="752.4" width="1.2" height="1.2" fill="#dcdcdc" opacity="0.8"/>
<rect x="58.2" y="755.4" width="1.6" height="1.6" fill="#484848" opacity="1"/><rect x="59.2" y="756.4" width="1.2" height="1.2" fill="#dcdcdc" opacity="0.8"/>
<rect x="61.3" y="755.4" width="1.6" height="1.6" fill="#484848" opacity="1"/><rect x="62.3" y="756.4" width="1.2" height="1.2" fill="#dcdcdc" opacity="0.8"/>
<rect x="64.4" y="755.4" width="1.6" height="1.6" fill="#484848" opacity="1"/><rect x="65.4" y="756.4" width="1.2" height="1.2" fill="#dcdcdc" opacity="0.8"/>
<rect x="58.2" y="759.4" width="1.6" height="1.6" fill="#484848" opacity="1"/><rect x="59.2" y="760.4" width="1.2" height="1.2" fill="#dcdcdc" opacity="0.8"/>
<rect x="61.3" y="759.4" width="1.6" height="1.6" fill="#484848" opacity="1"/><rect x="62.3" y="760.4" width="1.2" height="1.2" fill="#dcdcdc" opacity="0.8"/>
<rect x="64.4" y="759.4" width="1.6" height="1.6" fill="#484848" opacity="1"/><rect x="65.4" y="760.4" width="1.2" height="1.2" fill="#dcdcdc" opacity="0.8"/>
<rect x="58.2" y="763.4" width="1.6" height="1.6" fill="#484848" opacity="0.45"/><rect x="59.2" y="764.4" width="1.2" height="1.2" fill="#dcdcdc" opacity="0.36000000000000004"/>
<rect x="61.3" y="763.4" width="1.6" height="1.6" fill="#484848" opacity="0.45"/><rect x="62.3" y="764.4" width="1.2" height="1.2" fill="#dcdcdc" opacity="0.36000000000000004"/>
<rect x="64.4" y="763.4" width="1.6" height="1.6" fill="#484848" opacity="0.45"/><rect x="65.4" y="764.4" width="1.2" height="1.2" fill="#dcdcdc" opacity="0.36000000000000004"/>
<text x="90.3" y="760.3" font-family="Liberation Sans, sans-serif" font-weight="bold" font-size="25.5" fill="#3f9fe8">e</text>
<path d="M89.5,757.5 q-2.5,-4.5 4,-9 q6,-4 11.5,-3.2" fill="none" stroke="#f2b62c" stroke-width="1.7"/>
<path d="M1252.5,750.5 h3 l4,-3.8 v14 l-4,-3.8 h-3 z" fill="#b4b4b4" stroke="#fff" stroke-width="1.3" stroke-linejoin="round"/>
<path d="M1261.5,750 q2.2,3.5 0,7 M1263.8,748 q3.6,5.5 0,11" fill="none" stroke="#fff" stroke-width="1.2"/>
<text x="1299.8" y="758" font-family="Liberation Sans, sans-serif" font-size="12" letter-spacing="-0.35" fill="#fff">10:31</text>
<defs><linearGradient id="sd" x1="0" y1="0" x2="1" y2="1"><stop offset="0" stop-color="#c8c8c8"/><stop offset="0.5" stop-color="#a4a4a4"/><stop offset="1" stop-color="#d0d0d0"/></linearGradient></defs>
<rect x="1352.5" y="739.5" width="14" height="29" fill="url(#sd)" stroke="#d8d8d8" stroke-width="1"/>
<rect x="1351" y="739" width="1" height="29" fill="#8a8a8a"/>
</svg>
<div id="titlewhite" class="abs"></div>
<div id="bigwhite" class="abs"></div>
</body></html>
